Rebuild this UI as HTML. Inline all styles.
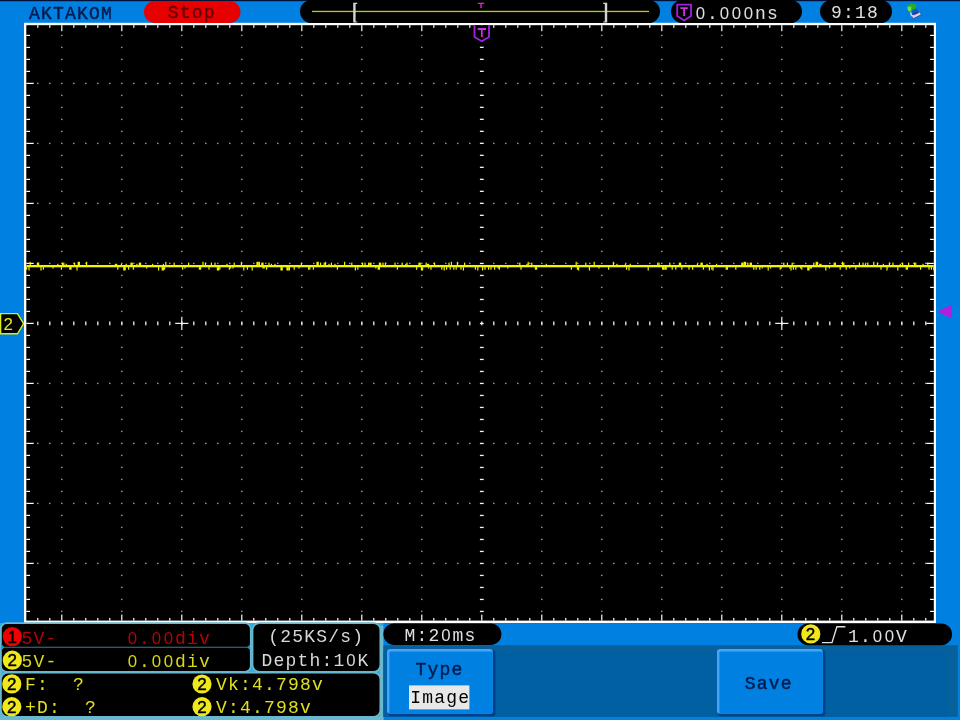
<!DOCTYPE html>
<html><head><meta charset="utf-8"><title>Oscilloscope</title>
<style>html,body{margin:0;padding:0;background:#0080E0;width:960px;height:720px;overflow:hidden}svg{display:block;filter:blur(0.4px)}.m{font-family:"Liberation Mono",monospace;white-space:pre}.s{font-family:"Liberation Sans",sans-serif}</style></head><body>
<svg width="960" height="720" viewBox="0 0 960 720">
<rect x="0" y="0" width="960" height="720" fill="#0080E0"/>
<rect x="0" y="0" width="960" height="1.2" fill="#001038"/>
<rect x="24" y="22.8" width="912" height="600.2" fill="#fff"/>
<rect x="26.3" y="25.2" width="907.5" height="595.4" fill="#000"/>
<g fill="#a4a4a4">
<rect x="61.10" y="34.70" width="1.4" height="1.4"/>
<rect x="61.10" y="46.70" width="1.4" height="1.4"/>
<rect x="61.10" y="58.70" width="1.4" height="1.4"/>
<rect x="61.10" y="70.70" width="1.4" height="1.4"/>
<rect x="61.10" y="82.70" width="1.4" height="1.4"/>
<rect x="61.10" y="94.70" width="1.4" height="1.4"/>
<rect x="61.10" y="106.70" width="1.4" height="1.4"/>
<rect x="61.10" y="118.70" width="1.4" height="1.4"/>
<rect x="61.10" y="130.70" width="1.4" height="1.4"/>
<rect x="61.10" y="142.70" width="1.4" height="1.4"/>
<rect x="61.10" y="154.70" width="1.4" height="1.4"/>
<rect x="61.10" y="166.70" width="1.4" height="1.4"/>
<rect x="61.10" y="178.70" width="1.4" height="1.4"/>
<rect x="61.10" y="190.70" width="1.4" height="1.4"/>
<rect x="61.10" y="202.70" width="1.4" height="1.4"/>
<rect x="61.10" y="214.70" width="1.4" height="1.4"/>
<rect x="61.10" y="226.70" width="1.4" height="1.4"/>
<rect x="61.10" y="238.70" width="1.4" height="1.4"/>
<rect x="61.10" y="250.70" width="1.4" height="1.4"/>
<rect x="61.10" y="262.70" width="1.4" height="1.4"/>
<rect x="61.10" y="274.70" width="1.4" height="1.4"/>
<rect x="61.10" y="286.70" width="1.4" height="1.4"/>
<rect x="61.10" y="298.70" width="1.4" height="1.4"/>
<rect x="61.10" y="310.70" width="1.4" height="1.4"/>
<rect x="61.10" y="322.70" width="1.4" height="1.4"/>
<rect x="61.10" y="334.70" width="1.4" height="1.4"/>
<rect x="61.10" y="346.70" width="1.4" height="1.4"/>
<rect x="61.10" y="358.70" width="1.4" height="1.4"/>
<rect x="61.10" y="370.70" width="1.4" height="1.4"/>
<rect x="61.10" y="382.70" width="1.4" height="1.4"/>
<rect x="61.10" y="394.70" width="1.4" height="1.4"/>
<rect x="61.10" y="406.70" width="1.4" height="1.4"/>
<rect x="61.10" y="418.70" width="1.4" height="1.4"/>
<rect x="61.10" y="430.70" width="1.4" height="1.4"/>
<rect x="61.10" y="442.70" width="1.4" height="1.4"/>
<rect x="61.10" y="454.70" width="1.4" height="1.4"/>
<rect x="61.10" y="466.70" width="1.4" height="1.4"/>
<rect x="61.10" y="478.70" width="1.4" height="1.4"/>
<rect x="61.10" y="490.70" width="1.4" height="1.4"/>
<rect x="61.10" y="502.70" width="1.4" height="1.4"/>
<rect x="61.10" y="514.70" width="1.4" height="1.4"/>
<rect x="61.10" y="526.70" width="1.4" height="1.4"/>
<rect x="61.10" y="538.70" width="1.4" height="1.4"/>
<rect x="61.10" y="550.70" width="1.4" height="1.4"/>
<rect x="61.10" y="562.70" width="1.4" height="1.4"/>
<rect x="61.10" y="574.70" width="1.4" height="1.4"/>
<rect x="61.10" y="586.70" width="1.4" height="1.4"/>
<rect x="61.10" y="598.70" width="1.4" height="1.4"/>
<rect x="61.10" y="610.70" width="1.4" height="1.4"/>
<rect x="121.10" y="34.70" width="1.4" height="1.4"/>
<rect x="121.10" y="46.70" width="1.4" height="1.4"/>
<rect x="121.10" y="58.70" width="1.4" height="1.4"/>
<rect x="121.10" y="70.70" width="1.4" height="1.4"/>
<rect x="121.10" y="82.70" width="1.4" height="1.4"/>
<rect x="121.10" y="94.70" width="1.4" height="1.4"/>
<rect x="121.10" y="106.70" width="1.4" height="1.4"/>
<rect x="121.10" y="118.70" width="1.4" height="1.4"/>
<rect x="121.10" y="130.70" width="1.4" height="1.4"/>
<rect x="121.10" y="142.70" width="1.4" height="1.4"/>
<rect x="121.10" y="154.70" width="1.4" height="1.4"/>
<rect x="121.10" y="166.70" width="1.4" height="1.4"/>
<rect x="121.10" y="178.70" width="1.4" height="1.4"/>
<rect x="121.10" y="190.70" width="1.4" height="1.4"/>
<rect x="121.10" y="202.70" width="1.4" height="1.4"/>
<rect x="121.10" y="214.70" width="1.4" height="1.4"/>
<rect x="121.10" y="226.70" width="1.4" height="1.4"/>
<rect x="121.10" y="238.70" width="1.4" height="1.4"/>
<rect x="121.10" y="250.70" width="1.4" height="1.4"/>
<rect x="121.10" y="262.70" width="1.4" height="1.4"/>
<rect x="121.10" y="274.70" width="1.4" height="1.4"/>
<rect x="121.10" y="286.70" width="1.4" height="1.4"/>
<rect x="121.10" y="298.70" width="1.4" height="1.4"/>
<rect x="121.10" y="310.70" width="1.4" height="1.4"/>
<rect x="121.10" y="322.70" width="1.4" height="1.4"/>
<rect x="121.10" y="334.70" width="1.4" height="1.4"/>
<rect x="121.10" y="346.70" width="1.4" height="1.4"/>
<rect x="121.10" y="358.70" width="1.4" height="1.4"/>
<rect x="121.10" y="370.70" width="1.4" height="1.4"/>
<rect x="121.10" y="382.70" width="1.4" height="1.4"/>
<rect x="121.10" y="394.70" width="1.4" height="1.4"/>
<rect x="121.10" y="406.70" width="1.4" height="1.4"/>
<rect x="121.10" y="418.70" width="1.4" height="1.4"/>
<rect x="121.10" y="430.70" width="1.4" height="1.4"/>
<rect x="121.10" y="442.70" width="1.4" height="1.4"/>
<rect x="121.10" y="454.70" width="1.4" height="1.4"/>
<rect x="121.10" y="466.70" width="1.4" height="1.4"/>
<rect x="121.10" y="478.70" width="1.4" height="1.4"/>
<rect x="121.10" y="490.70" width="1.4" height="1.4"/>
<rect x="121.10" y="502.70" width="1.4" height="1.4"/>
<rect x="121.10" y="514.70" width="1.4" height="1.4"/>
<rect x="121.10" y="526.70" width="1.4" height="1.4"/>
<rect x="121.10" y="538.70" width="1.4" height="1.4"/>
<rect x="121.10" y="550.70" width="1.4" height="1.4"/>
<rect x="121.10" y="562.70" width="1.4" height="1.4"/>
<rect x="121.10" y="574.70" width="1.4" height="1.4"/>
<rect x="121.10" y="586.70" width="1.4" height="1.4"/>
<rect x="121.10" y="598.70" width="1.4" height="1.4"/>
<rect x="121.10" y="610.70" width="1.4" height="1.4"/>
<rect x="181.10" y="34.70" width="1.4" height="1.4"/>
<rect x="181.10" y="46.70" width="1.4" height="1.4"/>
<rect x="181.10" y="58.70" width="1.4" height="1.4"/>
<rect x="181.10" y="70.70" width="1.4" height="1.4"/>
<rect x="181.10" y="82.70" width="1.4" height="1.4"/>
<rect x="181.10" y="94.70" width="1.4" height="1.4"/>
<rect x="181.10" y="106.70" width="1.4" height="1.4"/>
<rect x="181.10" y="118.70" width="1.4" height="1.4"/>
<rect x="181.10" y="130.70" width="1.4" height="1.4"/>
<rect x="181.10" y="142.70" width="1.4" height="1.4"/>
<rect x="181.10" y="154.70" width="1.4" height="1.4"/>
<rect x="181.10" y="166.70" width="1.4" height="1.4"/>
<rect x="181.10" y="178.70" width="1.4" height="1.4"/>
<rect x="181.10" y="190.70" width="1.4" height="1.4"/>
<rect x="181.10" y="202.70" width="1.4" height="1.4"/>
<rect x="181.10" y="214.70" width="1.4" height="1.4"/>
<rect x="181.10" y="226.70" width="1.4" height="1.4"/>
<rect x="181.10" y="238.70" width="1.4" height="1.4"/>
<rect x="181.10" y="250.70" width="1.4" height="1.4"/>
<rect x="181.10" y="262.70" width="1.4" height="1.4"/>
<rect x="181.10" y="274.70" width="1.4" height="1.4"/>
<rect x="181.10" y="286.70" width="1.4" height="1.4"/>
<rect x="181.10" y="298.70" width="1.4" height="1.4"/>
<rect x="181.10" y="310.70" width="1.4" height="1.4"/>
<rect x="181.10" y="322.70" width="1.4" height="1.4"/>
<rect x="181.10" y="334.70" width="1.4" height="1.4"/>
<rect x="181.10" y="346.70" width="1.4" height="1.4"/>
<rect x="181.10" y="358.70" width="1.4" height="1.4"/>
<rect x="181.10" y="370.70" width="1.4" height="1.4"/>
<rect x="181.10" y="382.70" width="1.4" height="1.4"/>
<rect x="181.10" y="394.70" width="1.4" height="1.4"/>
<rect x="181.10" y="406.70" width="1.4" height="1.4"/>
<rect x="181.10" y="418.70" width="1.4" height="1.4"/>
<rect x="181.10" y="430.70" width="1.4" height="1.4"/>
<rect x="181.10" y="442.70" width="1.4" height="1.4"/>
<rect x="181.10" y="454.70" width="1.4" height="1.4"/>
<rect x="181.10" y="466.70" width="1.4" height="1.4"/>
<rect x="181.10" y="478.70" width="1.4" height="1.4"/>
<rect x="181.10" y="490.70" width="1.4" height="1.4"/>
<rect x="181.10" y="502.70" width="1.4" height="1.4"/>
<rect x="181.10" y="514.70" width="1.4" height="1.4"/>
<rect x="181.10" y="526.70" width="1.4" height="1.4"/>
<rect x="181.10" y="538.70" width="1.4" height="1.4"/>
<rect x="181.10" y="550.70" width="1.4" height="1.4"/>
<rect x="181.10" y="562.70" width="1.4" height="1.4"/>
<rect x="181.10" y="574.70" width="1.4" height="1.4"/>
<rect x="181.10" y="586.70" width="1.4" height="1.4"/>
<rect x="181.10" y="598.70" width="1.4" height="1.4"/>
<rect x="181.10" y="610.70" width="1.4" height="1.4"/>
<rect x="241.10" y="34.70" width="1.4" height="1.4"/>
<rect x="241.10" y="46.70" width="1.4" height="1.4"/>
<rect x="241.10" y="58.70" width="1.4" height="1.4"/>
<rect x="241.10" y="70.70" width="1.4" height="1.4"/>
<rect x="241.10" y="82.70" width="1.4" height="1.4"/>
<rect x="241.10" y="94.70" width="1.4" height="1.4"/>
<rect x="241.10" y="106.70" width="1.4" height="1.4"/>
<rect x="241.10" y="118.70" width="1.4" height="1.4"/>
<rect x="241.10" y="130.70" width="1.4" height="1.4"/>
<rect x="241.10" y="142.70" width="1.4" height="1.4"/>
<rect x="241.10" y="154.70" width="1.4" height="1.4"/>
<rect x="241.10" y="166.70" width="1.4" height="1.4"/>
<rect x="241.10" y="178.70" width="1.4" height="1.4"/>
<rect x="241.10" y="190.70" width="1.4" height="1.4"/>
<rect x="241.10" y="202.70" width="1.4" height="1.4"/>
<rect x="241.10" y="214.70" width="1.4" height="1.4"/>
<rect x="241.10" y="226.70" width="1.4" height="1.4"/>
<rect x="241.10" y="238.70" width="1.4" height="1.4"/>
<rect x="241.10" y="250.70" width="1.4" height="1.4"/>
<rect x="241.10" y="262.70" width="1.4" height="1.4"/>
<rect x="241.10" y="274.70" width="1.4" height="1.4"/>
<rect x="241.10" y="286.70" width="1.4" height="1.4"/>
<rect x="241.10" y="298.70" width="1.4" height="1.4"/>
<rect x="241.10" y="310.70" width="1.4" height="1.4"/>
<rect x="241.10" y="322.70" width="1.4" height="1.4"/>
<rect x="241.10" y="334.70" width="1.4" height="1.4"/>
<rect x="241.10" y="346.70" width="1.4" height="1.4"/>
<rect x="241.10" y="358.70" width="1.4" height="1.4"/>
<rect x="241.10" y="370.70" width="1.4" height="1.4"/>
<rect x="241.10" y="382.70" width="1.4" height="1.4"/>
<rect x="241.10" y="394.70" width="1.4" height="1.4"/>
<rect x="241.10" y="406.70" width="1.4" height="1.4"/>
<rect x="241.10" y="418.70" width="1.4" height="1.4"/>
<rect x="241.10" y="430.70" width="1.4" height="1.4"/>
<rect x="241.10" y="442.70" width="1.4" height="1.4"/>
<rect x="241.10" y="454.70" width="1.4" height="1.4"/>
<rect x="241.10" y="466.70" width="1.4" height="1.4"/>
<rect x="241.10" y="478.70" width="1.4" height="1.4"/>
<rect x="241.10" y="490.70" width="1.4" height="1.4"/>
<rect x="241.10" y="502.70" width="1.4" height="1.4"/>
<rect x="241.10" y="514.70" width="1.4" height="1.4"/>
<rect x="241.10" y="526.70" width="1.4" height="1.4"/>
<rect x="241.10" y="538.70" width="1.4" height="1.4"/>
<rect x="241.10" y="550.70" width="1.4" height="1.4"/>
<rect x="241.10" y="562.70" width="1.4" height="1.4"/>
<rect x="241.10" y="574.70" width="1.4" height="1.4"/>
<rect x="241.10" y="586.70" width="1.4" height="1.4"/>
<rect x="241.10" y="598.70" width="1.4" height="1.4"/>
<rect x="241.10" y="610.70" width="1.4" height="1.4"/>
<rect x="301.10" y="34.70" width="1.4" height="1.4"/>
<rect x="301.10" y="46.70" width="1.4" height="1.4"/>
<rect x="301.10" y="58.70" width="1.4" height="1.4"/>
<rect x="301.10" y="70.70" width="1.4" height="1.4"/>
<rect x="301.10" y="82.70" width="1.4" height="1.4"/>
<rect x="301.10" y="94.70" width="1.4" height="1.4"/>
<rect x="301.10" y="106.70" width="1.4" height="1.4"/>
<rect x="301.10" y="118.70" width="1.4" height="1.4"/>
<rect x="301.10" y="130.70" width="1.4" height="1.4"/>
<rect x="301.10" y="142.70" width="1.4" height="1.4"/>
<rect x="301.10" y="154.70" width="1.4" height="1.4"/>
<rect x="301.10" y="166.70" width="1.4" height="1.4"/>
<rect x="301.10" y="178.70" width="1.4" height="1.4"/>
<rect x="301.10" y="190.70" width="1.4" height="1.4"/>
<rect x="301.10" y="202.70" width="1.4" height="1.4"/>
<rect x="301.10" y="214.70" width="1.4" height="1.4"/>
<rect x="301.10" y="226.70" width="1.4" height="1.4"/>
<rect x="301.10" y="238.70" width="1.4" height="1.4"/>
<rect x="301.10" y="250.70" width="1.4" height="1.4"/>
<rect x="301.10" y="262.70" width="1.4" height="1.4"/>
<rect x="301.10" y="274.70" width="1.4" height="1.4"/>
<rect x="301.10" y="286.70" width="1.4" height="1.4"/>
<rect x="301.10" y="298.70" width="1.4" height="1.4"/>
<rect x="301.10" y="310.70" width="1.4" height="1.4"/>
<rect x="301.10" y="322.70" width="1.4" height="1.4"/>
<rect x="301.10" y="334.70" width="1.4" height="1.4"/>
<rect x="301.10" y="346.70" width="1.4" height="1.4"/>
<rect x="301.10" y="358.70" width="1.4" height="1.4"/>
<rect x="301.10" y="370.70" width="1.4" height="1.4"/>
<rect x="301.10" y="382.70" width="1.4" height="1.4"/>
<rect x="301.10" y="394.70" width="1.4" height="1.4"/>
<rect x="301.10" y="406.70" width="1.4" height="1.4"/>
<rect x="301.10" y="418.70" width="1.4" height="1.4"/>
<rect x="301.10" y="430.70" width="1.4" height="1.4"/>
<rect x="301.10" y="442.70" width="1.4" height="1.4"/>
<rect x="301.10" y="454.70" width="1.4" height="1.4"/>
<rect x="301.10" y="466.70" width="1.4" height="1.4"/>
<rect x="301.10" y="478.70" width="1.4" height="1.4"/>
<rect x="301.10" y="490.70" width="1.4" height="1.4"/>
<rect x="301.10" y="502.70" width="1.4" height="1.4"/>
<rect x="301.10" y="514.70" width="1.4" height="1.4"/>
<rect x="301.10" y="526.70" width="1.4" height="1.4"/>
<rect x="301.10" y="538.70" width="1.4" height="1.4"/>
<rect x="301.10" y="550.70" width="1.4" height="1.4"/>
<rect x="301.10" y="562.70" width="1.4" height="1.4"/>
<rect x="301.10" y="574.70" width="1.4" height="1.4"/>
<rect x="301.10" y="586.70" width="1.4" height="1.4"/>
<rect x="301.10" y="598.70" width="1.4" height="1.4"/>
<rect x="301.10" y="610.70" width="1.4" height="1.4"/>
<rect x="361.10" y="34.70" width="1.4" height="1.4"/>
<rect x="361.10" y="46.70" width="1.4" height="1.4"/>
<rect x="361.10" y="58.70" width="1.4" height="1.4"/>
<rect x="361.10" y="70.70" width="1.4" height="1.4"/>
<rect x="361.10" y="82.70" width="1.4" height="1.4"/>
<rect x="361.10" y="94.70" width="1.4" height="1.4"/>
<rect x="361.10" y="106.70" width="1.4" height="1.4"/>
<rect x="361.10" y="118.70" width="1.4" height="1.4"/>
<rect x="361.10" y="130.70" width="1.4" height="1.4"/>
<rect x="361.10" y="142.70" width="1.4" height="1.4"/>
<rect x="361.10" y="154.70" width="1.4" height="1.4"/>
<rect x="361.10" y="166.70" width="1.4" height="1.4"/>
<rect x="361.10" y="178.70" width="1.4" height="1.4"/>
<rect x="361.10" y="190.70" width="1.4" height="1.4"/>
<rect x="361.10" y="202.70" width="1.4" height="1.4"/>
<rect x="361.10" y="214.70" width="1.4" height="1.4"/>
<rect x="361.10" y="226.70" width="1.4" height="1.4"/>
<rect x="361.10" y="238.70" width="1.4" height="1.4"/>
<rect x="361.10" y="250.70" width="1.4" height="1.4"/>
<rect x="361.10" y="262.70" width="1.4" height="1.4"/>
<rect x="361.10" y="274.70" width="1.4" height="1.4"/>
<rect x="361.10" y="286.70" width="1.4" height="1.4"/>
<rect x="361.10" y="298.70" width="1.4" height="1.4"/>
<rect x="361.10" y="310.70" width="1.4" height="1.4"/>
<rect x="361.10" y="322.70" width="1.4" height="1.4"/>
<rect x="361.10" y="334.70" width="1.4" height="1.4"/>
<rect x="361.10" y="346.70" width="1.4" height="1.4"/>
<rect x="361.10" y="358.70" width="1.4" height="1.4"/>
<rect x="361.10" y="370.70" width="1.4" height="1.4"/>
<rect x="361.10" y="382.70" width="1.4" height="1.4"/>
<rect x="361.10" y="394.70" width="1.4" height="1.4"/>
<rect x="361.10" y="406.70" width="1.4" height="1.4"/>
<rect x="361.10" y="418.70" width="1.4" height="1.4"/>
<rect x="361.10" y="430.70" width="1.4" height="1.4"/>
<rect x="361.10" y="442.70" width="1.4" height="1.4"/>
<rect x="361.10" y="454.70" width="1.4" height="1.4"/>
<rect x="361.10" y="466.70" width="1.4" height="1.4"/>
<rect x="361.10" y="478.70" width="1.4" height="1.4"/>
<rect x="361.10" y="490.70" width="1.4" height="1.4"/>
<rect x="361.10" y="502.70" width="1.4" height="1.4"/>
<rect x="361.10" y="514.70" width="1.4" height="1.4"/>
<rect x="361.10" y="526.70" width="1.4" height="1.4"/>
<rect x="361.10" y="538.70" width="1.4" height="1.4"/>
<rect x="361.10" y="550.70" width="1.4" height="1.4"/>
<rect x="361.10" y="562.70" width="1.4" height="1.4"/>
<rect x="361.10" y="574.70" width="1.4" height="1.4"/>
<rect x="361.10" y="586.70" width="1.4" height="1.4"/>
<rect x="361.10" y="598.70" width="1.4" height="1.4"/>
<rect x="361.10" y="610.70" width="1.4" height="1.4"/>
<rect x="421.10" y="34.70" width="1.4" height="1.4"/>
<rect x="421.10" y="46.70" width="1.4" height="1.4"/>
<rect x="421.10" y="58.70" width="1.4" height="1.4"/>
<rect x="421.10" y="70.70" width="1.4" height="1.4"/>
<rect x="421.10" y="82.70" width="1.4" height="1.4"/>
<rect x="421.10" y="94.70" width="1.4" height="1.4"/>
<rect x="421.10" y="106.70" width="1.4" height="1.4"/>
<rect x="421.10" y="118.70" width="1.4" height="1.4"/>
<rect x="421.10" y="130.70" width="1.4" height="1.4"/>
<rect x="421.10" y="142.70" width="1.4" height="1.4"/>
<rect x="421.10" y="154.70" width="1.4" height="1.4"/>
<rect x="421.10" y="166.70" width="1.4" height="1.4"/>
<rect x="421.10" y="178.70" width="1.4" height="1.4"/>
<rect x="421.10" y="190.70" width="1.4" height="1.4"/>
<rect x="421.10" y="202.70" width="1.4" height="1.4"/>
<rect x="421.10" y="214.70" width="1.4" height="1.4"/>
<rect x="421.10" y="226.70" width="1.4" height="1.4"/>
<rect x="421.10" y="238.70" width="1.4" height="1.4"/>
<rect x="421.10" y="250.70" width="1.4" height="1.4"/>
<rect x="421.10" y="262.70" width="1.4" height="1.4"/>
<rect x="421.10" y="274.70" width="1.4" height="1.4"/>
<rect x="421.10" y="286.70" width="1.4" height="1.4"/>
<rect x="421.10" y="298.70" width="1.4" height="1.4"/>
<rect x="421.10" y="310.70" width="1.4" height="1.4"/>
<rect x="421.10" y="322.70" width="1.4" height="1.4"/>
<rect x="421.10" y="334.70" width="1.4" height="1.4"/>
<rect x="421.10" y="346.70" width="1.4" height="1.4"/>
<rect x="421.10" y="358.70" width="1.4" height="1.4"/>
<rect x="421.10" y="370.70" width="1.4" height="1.4"/>
<rect x="421.10" y="382.70" width="1.4" height="1.4"/>
<rect x="421.10" y="394.70" width="1.4" height="1.4"/>
<rect x="421.10" y="406.70" width="1.4" height="1.4"/>
<rect x="421.10" y="418.70" width="1.4" height="1.4"/>
<rect x="421.10" y="430.70" width="1.4" height="1.4"/>
<rect x="421.10" y="442.70" width="1.4" height="1.4"/>
<rect x="421.10" y="454.70" width="1.4" height="1.4"/>
<rect x="421.10" y="466.70" width="1.4" height="1.4"/>
<rect x="421.10" y="478.70" width="1.4" height="1.4"/>
<rect x="421.10" y="490.70" width="1.4" height="1.4"/>
<rect x="421.10" y="502.70" width="1.4" height="1.4"/>
<rect x="421.10" y="514.70" width="1.4" height="1.4"/>
<rect x="421.10" y="526.70" width="1.4" height="1.4"/>
<rect x="421.10" y="538.70" width="1.4" height="1.4"/>
<rect x="421.10" y="550.70" width="1.4" height="1.4"/>
<rect x="421.10" y="562.70" width="1.4" height="1.4"/>
<rect x="421.10" y="574.70" width="1.4" height="1.4"/>
<rect x="421.10" y="586.70" width="1.4" height="1.4"/>
<rect x="421.10" y="598.70" width="1.4" height="1.4"/>
<rect x="421.10" y="610.70" width="1.4" height="1.4"/>
<rect x="541.10" y="34.70" width="1.4" height="1.4"/>
<rect x="541.10" y="46.70" width="1.4" height="1.4"/>
<rect x="541.10" y="58.70" width="1.4" height="1.4"/>
<rect x="541.10" y="70.70" width="1.4" height="1.4"/>
<rect x="541.10" y="82.70" width="1.4" height="1.4"/>
<rect x="541.10" y="94.70" width="1.4" height="1.4"/>
<rect x="541.10" y="106.70" width="1.4" height="1.4"/>
<rect x="541.10" y="118.70" width="1.4" height="1.4"/>
<rect x="541.10" y="130.70" width="1.4" height="1.4"/>
<rect x="541.10" y="142.70" width="1.4" height="1.4"/>
<rect x="541.10" y="154.70" width="1.4" height="1.4"/>
<rect x="541.10" y="166.70" width="1.4" height="1.4"/>
<rect x="541.10" y="178.70" width="1.4" height="1.4"/>
<rect x="541.10" y="190.70" width="1.4" height="1.4"/>
<rect x="541.10" y="202.70" width="1.4" height="1.4"/>
<rect x="541.10" y="214.70" width="1.4" height="1.4"/>
<rect x="541.10" y="226.70" width="1.4" height="1.4"/>
<rect x="541.10" y="238.70" width="1.4" height="1.4"/>
<rect x="541.10" y="250.70" width="1.4" height="1.4"/>
<rect x="541.10" y="262.70" width="1.4" height="1.4"/>
<rect x="541.10" y="274.70" width="1.4" height="1.4"/>
<rect x="541.10" y="286.70" width="1.4" height="1.4"/>
<rect x="541.10" y="298.70" width="1.4" height="1.4"/>
<rect x="541.10" y="310.70" width="1.4" height="1.4"/>
<rect x="541.10" y="322.70" width="1.4" height="1.4"/>
<rect x="541.10" y="334.70" width="1.4" height="1.4"/>
<rect x="541.10" y="346.70" width="1.4" height="1.4"/>
<rect x="541.10" y="358.70" width="1.4" height="1.4"/>
<rect x="541.10" y="370.70" width="1.4" height="1.4"/>
<rect x="541.10" y="382.70" width="1.4" height="1.4"/>
<rect x="541.10" y="394.70" width="1.4" height="1.4"/>
<rect x="541.10" y="406.70" width="1.4" height="1.4"/>
<rect x="541.10" y="418.70" width="1.4" height="1.4"/>
<rect x="541.10" y="430.70" width="1.4" height="1.4"/>
<rect x="541.10" y="442.70" width="1.4" height="1.4"/>
<rect x="541.10" y="454.70" width="1.4" height="1.4"/>
<rect x="541.10" y="466.70" width="1.4" height="1.4"/>
<rect x="541.10" y="478.70" width="1.4" height="1.4"/>
<rect x="541.10" y="490.70" width="1.4" height="1.4"/>
<rect x="541.10" y="502.70" width="1.4" height="1.4"/>
<rect x="541.10" y="514.70" width="1.4" height="1.4"/>
<rect x="541.10" y="526.70" width="1.4" height="1.4"/>
<rect x="541.10" y="538.70" width="1.4" height="1.4"/>
<rect x="541.10" y="550.70" width="1.4" height="1.4"/>
<rect x="541.10" y="562.70" width="1.4" height="1.4"/>
<rect x="541.10" y="574.70" width="1.4" height="1.4"/>
<rect x="541.10" y="586.70" width="1.4" height="1.4"/>
<rect x="541.10" y="598.70" width="1.4" height="1.4"/>
<rect x="541.10" y="610.70" width="1.4" height="1.4"/>
<rect x="601.10" y="34.70" width="1.4" height="1.4"/>
<rect x="601.10" y="46.70" width="1.4" height="1.4"/>
<rect x="601.10" y="58.70" width="1.4" height="1.4"/>
<rect x="601.10" y="70.70" width="1.4" height="1.4"/>
<rect x="601.10" y="82.70" width="1.4" height="1.4"/>
<rect x="601.10" y="94.70" width="1.4" height="1.4"/>
<rect x="601.10" y="106.70" width="1.4" height="1.4"/>
<rect x="601.10" y="118.70" width="1.4" height="1.4"/>
<rect x="601.10" y="130.70" width="1.4" height="1.4"/>
<rect x="601.10" y="142.70" width="1.4" height="1.4"/>
<rect x="601.10" y="154.70" width="1.4" height="1.4"/>
<rect x="601.10" y="166.70" width="1.4" height="1.4"/>
<rect x="601.10" y="178.70" width="1.4" height="1.4"/>
<rect x="601.10" y="190.70" width="1.4" height="1.4"/>
<rect x="601.10" y="202.70" width="1.4" height="1.4"/>
<rect x="601.10" y="214.70" width="1.4" height="1.4"/>
<rect x="601.10" y="226.70" width="1.4" height="1.4"/>
<rect x="601.10" y="238.70" width="1.4" height="1.4"/>
<rect x="601.10" y="250.70" width="1.4" height="1.4"/>
<rect x="601.10" y="262.70" width="1.4" height="1.4"/>
<rect x="601.10" y="274.70" width="1.4" height="1.4"/>
<rect x="601.10" y="286.70" width="1.4" height="1.4"/>
<rect x="601.10" y="298.70" width="1.4" height="1.4"/>
<rect x="601.10" y="310.70" width="1.4" height="1.4"/>
<rect x="601.10" y="322.70" width="1.4" height="1.4"/>
<rect x="601.10" y="334.70" width="1.4" height="1.4"/>
<rect x="601.10" y="346.70" width="1.4" height="1.4"/>
<rect x="601.10" y="358.70" width="1.4" height="1.4"/>
<rect x="601.10" y="370.70" width="1.4" height="1.4"/>
<rect x="601.10" y="382.70" width="1.4" height="1.4"/>
<rect x="601.10" y="394.70" width="1.4" height="1.4"/>
<rect x="601.10" y="406.70" width="1.4" height="1.4"/>
<rect x="601.10" y="418.70" width="1.4" height="1.4"/>
<rect x="601.10" y="430.70" width="1.4" height="1.4"/>
<rect x="601.10" y="442.70" width="1.4" height="1.4"/>
<rect x="601.10" y="454.70" width="1.4" height="1.4"/>
<rect x="601.10" y="466.70" width="1.4" height="1.4"/>
<rect x="601.10" y="478.70" width="1.4" height="1.4"/>
<rect x="601.10" y="490.70" width="1.4" height="1.4"/>
<rect x="601.10" y="502.70" width="1.4" height="1.4"/>
<rect x="601.10" y="514.70" width="1.4" height="1.4"/>
<rect x="601.10" y="526.70" width="1.4" height="1.4"/>
<rect x="601.10" y="538.70" width="1.4" height="1.4"/>
<rect x="601.10" y="550.70" width="1.4" height="1.4"/>
<rect x="601.10" y="562.70" width="1.4" height="1.4"/>
<rect x="601.10" y="574.70" width="1.4" height="1.4"/>
<rect x="601.10" y="586.70" width="1.4" height="1.4"/>
<rect x="601.10" y="598.70" width="1.4" height="1.4"/>
<rect x="601.10" y="610.70" width="1.4" height="1.4"/>
<rect x="661.10" y="34.70" width="1.4" height="1.4"/>
<rect x="661.10" y="46.70" width="1.4" height="1.4"/>
<rect x="661.10" y="58.70" width="1.4" height="1.4"/>
<rect x="661.10" y="70.70" width="1.4" height="1.4"/>
<rect x="661.10" y="82.70" width="1.4" height="1.4"/>
<rect x="661.10" y="94.70" width="1.4" height="1.4"/>
<rect x="661.10" y="106.70" width="1.4" height="1.4"/>
<rect x="661.10" y="118.70" width="1.4" height="1.4"/>
<rect x="661.10" y="130.70" width="1.4" height="1.4"/>
<rect x="661.10" y="142.70" width="1.4" height="1.4"/>
<rect x="661.10" y="154.70" width="1.4" height="1.4"/>
<rect x="661.10" y="166.70" width="1.4" height="1.4"/>
<rect x="661.10" y="178.70" width="1.4" height="1.4"/>
<rect x="661.10" y="190.70" width="1.4" height="1.4"/>
<rect x="661.10" y="202.70" width="1.4" height="1.4"/>
<rect x="661.10" y="214.70" width="1.4" height="1.4"/>
<rect x="661.10" y="226.70" width="1.4" height="1.4"/>
<rect x="661.10" y="238.70" width="1.4" height="1.4"/>
<rect x="661.10" y="250.70" width="1.4" height="1.4"/>
<rect x="661.10" y="262.70" width="1.4" height="1.4"/>
<rect x="661.10" y="274.70" width="1.4" height="1.4"/>
<rect x="661.10" y="286.70" width="1.4" height="1.4"/>
<rect x="661.10" y="298.70" width="1.4" height="1.4"/>
<rect x="661.10" y="310.70" width="1.4" height="1.4"/>
<rect x="661.10" y="322.70" width="1.4" height="1.4"/>
<rect x="661.10" y="334.70" width="1.4" height="1.4"/>
<rect x="661.10" y="346.70" width="1.4" height="1.4"/>
<rect x="661.10" y="358.70" width="1.4" height="1.4"/>
<rect x="661.10" y="370.70" width="1.4" height="1.4"/>
<rect x="661.10" y="382.70" width="1.4" height="1.4"/>
<rect x="661.10" y="394.70" width="1.4" height="1.4"/>
<rect x="661.10" y="406.70" width="1.4" height="1.4"/>
<rect x="661.10" y="418.70" width="1.4" height="1.4"/>
<rect x="661.10" y="430.70" width="1.4" height="1.4"/>
<rect x="661.10" y="442.70" width="1.4" height="1.4"/>
<rect x="661.10" y="454.70" width="1.4" height="1.4"/>
<rect x="661.10" y="466.70" width="1.4" height="1.4"/>
<rect x="661.10" y="478.70" width="1.4" height="1.4"/>
<rect x="661.10" y="490.70" width="1.4" height="1.4"/>
<rect x="661.10" y="502.70" width="1.4" height="1.4"/>
<rect x="661.10" y="514.70" width="1.4" height="1.4"/>
<rect x="661.10" y="526.70" width="1.4" height="1.4"/>
<rect x="661.10" y="538.70" width="1.4" height="1.4"/>
<rect x="661.10" y="550.70" width="1.4" height="1.4"/>
<rect x="661.10" y="562.70" width="1.4" height="1.4"/>
<rect x="661.10" y="574.70" width="1.4" height="1.4"/>
<rect x="661.10" y="586.70" width="1.4" height="1.4"/>
<rect x="661.10" y="598.70" width="1.4" height="1.4"/>
<rect x="661.10" y="610.70" width="1.4" height="1.4"/>
<rect x="721.10" y="34.70" width="1.4" height="1.4"/>
<rect x="721.10" y="46.70" width="1.4" height="1.4"/>
<rect x="721.10" y="58.70" width="1.4" height="1.4"/>
<rect x="721.10" y="70.70" width="1.4" height="1.4"/>
<rect x="721.10" y="82.70" width="1.4" height="1.4"/>
<rect x="721.10" y="94.70" width="1.4" height="1.4"/>
<rect x="721.10" y="106.70" width="1.4" height="1.4"/>
<rect x="721.10" y="118.70" width="1.4" height="1.4"/>
<rect x="721.10" y="130.70" width="1.4" height="1.4"/>
<rect x="721.10" y="142.70" width="1.4" height="1.4"/>
<rect x="721.10" y="154.70" width="1.4" height="1.4"/>
<rect x="721.10" y="166.70" width="1.4" height="1.4"/>
<rect x="721.10" y="178.70" width="1.4" height="1.4"/>
<rect x="721.10" y="190.70" width="1.4" height="1.4"/>
<rect x="721.10" y="202.70" width="1.4" height="1.4"/>
<rect x="721.10" y="214.70" width="1.4" height="1.4"/>
<rect x="721.10" y="226.70" width="1.4" height="1.4"/>
<rect x="721.10" y="238.70" width="1.4" height="1.4"/>
<rect x="721.10" y="250.70" width="1.4" height="1.4"/>
<rect x="721.10" y="262.70" width="1.4" height="1.4"/>
<rect x="721.10" y="274.70" width="1.4" height="1.4"/>
<rect x="721.10" y="286.70" width="1.4" height="1.4"/>
<rect x="721.10" y="298.70" width="1.4" height="1.4"/>
<rect x="721.10" y="310.70" width="1.4" height="1.4"/>
<rect x="721.10" y="322.70" width="1.4" height="1.4"/>
<rect x="721.10" y="334.70" width="1.4" height="1.4"/>
<rect x="721.10" y="346.70" width="1.4" height="1.4"/>
<rect x="721.10" y="358.70" width="1.4" height="1.4"/>
<rect x="721.10" y="370.70" width="1.4" height="1.4"/>
<rect x="721.10" y="382.70" width="1.4" height="1.4"/>
<rect x="721.10" y="394.70" width="1.4" height="1.4"/>
<rect x="721.10" y="406.70" width="1.4" height="1.4"/>
<rect x="721.10" y="418.70" width="1.4" height="1.4"/>
<rect x="721.10" y="430.70" width="1.4" height="1.4"/>
<rect x="721.10" y="442.70" width="1.4" height="1.4"/>
<rect x="721.10" y="454.70" width="1.4" height="1.4"/>
<rect x="721.10" y="466.70" width="1.4" height="1.4"/>
<rect x="721.10" y="478.70" width="1.4" height="1.4"/>
<rect x="721.10" y="490.70" width="1.4" height="1.4"/>
<rect x="721.10" y="502.70" width="1.4" height="1.4"/>
<rect x="721.10" y="514.70" width="1.4" height="1.4"/>
<rect x="721.10" y="526.70" width="1.4" height="1.4"/>
<rect x="721.10" y="538.70" width="1.4" height="1.4"/>
<rect x="721.10" y="550.70" width="1.4" height="1.4"/>
<rect x="721.10" y="562.70" width="1.4" height="1.4"/>
<rect x="721.10" y="574.70" width="1.4" height="1.4"/>
<rect x="721.10" y="586.70" width="1.4" height="1.4"/>
<rect x="721.10" y="598.70" width="1.4" height="1.4"/>
<rect x="721.10" y="610.70" width="1.4" height="1.4"/>
<rect x="781.10" y="34.70" width="1.4" height="1.4"/>
<rect x="781.10" y="46.70" width="1.4" height="1.4"/>
<rect x="781.10" y="58.70" width="1.4" height="1.4"/>
<rect x="781.10" y="70.70" width="1.4" height="1.4"/>
<rect x="781.10" y="82.70" width="1.4" height="1.4"/>
<rect x="781.10" y="94.70" width="1.4" height="1.4"/>
<rect x="781.10" y="106.70" width="1.4" height="1.4"/>
<rect x="781.10" y="118.70" width="1.4" height="1.4"/>
<rect x="781.10" y="130.70" width="1.4" height="1.4"/>
<rect x="781.10" y="142.70" width="1.4" height="1.4"/>
<rect x="781.10" y="154.70" width="1.4" height="1.4"/>
<rect x="781.10" y="166.70" width="1.4" height="1.4"/>
<rect x="781.10" y="178.70" width="1.4" height="1.4"/>
<rect x="781.10" y="190.70" width="1.4" height="1.4"/>
<rect x="781.10" y="202.70" width="1.4" height="1.4"/>
<rect x="781.10" y="214.70" width="1.4" height="1.4"/>
<rect x="781.10" y="226.70" width="1.4" height="1.4"/>
<rect x="781.10" y="238.70" width="1.4" height="1.4"/>
<rect x="781.10" y="250.70" width="1.4" height="1.4"/>
<rect x="781.10" y="262.70" width="1.4" height="1.4"/>
<rect x="781.10" y="274.70" width="1.4" height="1.4"/>
<rect x="781.10" y="286.70" width="1.4" height="1.4"/>
<rect x="781.10" y="298.70" width="1.4" height="1.4"/>
<rect x="781.10" y="310.70" width="1.4" height="1.4"/>
<rect x="781.10" y="322.70" width="1.4" height="1.4"/>
<rect x="781.10" y="334.70" width="1.4" height="1.4"/>
<rect x="781.10" y="346.70" width="1.4" height="1.4"/>
<rect x="781.10" y="358.70" width="1.4" height="1.4"/>
<rect x="781.10" y="370.70" width="1.4" height="1.4"/>
<rect x="781.10" y="382.70" width="1.4" height="1.4"/>
<rect x="781.10" y="394.70" width="1.4" height="1.4"/>
<rect x="781.10" y="406.70" width="1.4" height="1.4"/>
<rect x="781.10" y="418.70" width="1.4" height="1.4"/>
<rect x="781.10" y="430.70" width="1.4" height="1.4"/>
<rect x="781.10" y="442.70" width="1.4" height="1.4"/>
<rect x="781.10" y="454.70" width="1.4" height="1.4"/>
<rect x="781.10" y="466.70" width="1.4" height="1.4"/>
<rect x="781.10" y="478.70" width="1.4" height="1.4"/>
<rect x="781.10" y="490.70" width="1.4" height="1.4"/>
<rect x="781.10" y="502.70" width="1.4" height="1.4"/>
<rect x="781.10" y="514.70" width="1.4" height="1.4"/>
<rect x="781.10" y="526.70" width="1.4" height="1.4"/>
<rect x="781.10" y="538.70" width="1.4" height="1.4"/>
<rect x="781.10" y="550.70" width="1.4" height="1.4"/>
<rect x="781.10" y="562.70" width="1.4" height="1.4"/>
<rect x="781.10" y="574.70" width="1.4" height="1.4"/>
<rect x="781.10" y="586.70" width="1.4" height="1.4"/>
<rect x="781.10" y="598.70" width="1.4" height="1.4"/>
<rect x="781.10" y="610.70" width="1.4" height="1.4"/>
<rect x="841.10" y="34.70" width="1.4" height="1.4"/>
<rect x="841.10" y="46.70" width="1.4" height="1.4"/>
<rect x="841.10" y="58.70" width="1.4" height="1.4"/>
<rect x="841.10" y="70.70" width="1.4" height="1.4"/>
<rect x="841.10" y="82.70" width="1.4" height="1.4"/>
<rect x="841.10" y="94.70" width="1.4" height="1.4"/>
<rect x="841.10" y="106.70" width="1.4" height="1.4"/>
<rect x="841.10" y="118.70" width="1.4" height="1.4"/>
<rect x="841.10" y="130.70" width="1.4" height="1.4"/>
<rect x="841.10" y="142.70" width="1.4" height="1.4"/>
<rect x="841.10" y="154.70" width="1.4" height="1.4"/>
<rect x="841.10" y="166.70" width="1.4" height="1.4"/>
<rect x="841.10" y="178.70" width="1.4" height="1.4"/>
<rect x="841.10" y="190.70" width="1.4" height="1.4"/>
<rect x="841.10" y="202.70" width="1.4" height="1.4"/>
<rect x="841.10" y="214.70" width="1.4" height="1.4"/>
<rect x="841.10" y="226.70" width="1.4" height="1.4"/>
<rect x="841.10" y="238.70" width="1.4" height="1.4"/>
<rect x="841.10" y="250.70" width="1.4" height="1.4"/>
<rect x="841.10" y="262.70" width="1.4" height="1.4"/>
<rect x="841.10" y="274.70" width="1.4" height="1.4"/>
<rect x="841.10" y="286.70" width="1.4" height="1.4"/>
<rect x="841.10" y="298.70" width="1.4" height="1.4"/>
<rect x="841.10" y="310.70" width="1.4" height="1.4"/>
<rect x="841.10" y="322.70" width="1.4" height="1.4"/>
<rect x="841.10" y="334.70" width="1.4" height="1.4"/>
<rect x="841.10" y="346.70" width="1.4" height="1.4"/>
<rect x="841.10" y="358.70" width="1.4" height="1.4"/>
<rect x="841.10" y="370.70" width="1.4" height="1.4"/>
<rect x="841.10" y="382.70" width="1.4" height="1.4"/>
<rect x="841.10" y="394.70" width="1.4" height="1.4"/>
<rect x="841.10" y="406.70" width="1.4" height="1.4"/>
<rect x="841.10" y="418.70" width="1.4" height="1.4"/>
<rect x="841.10" y="430.70" width="1.4" height="1.4"/>
<rect x="841.10" y="442.70" width="1.4" height="1.4"/>
<rect x="841.10" y="454.70" width="1.4" height="1.4"/>
<rect x="841.10" y="466.70" width="1.4" height="1.4"/>
<rect x="841.10" y="478.70" width="1.4" height="1.4"/>
<rect x="841.10" y="490.70" width="1.4" height="1.4"/>
<rect x="841.10" y="502.70" width="1.4" height="1.4"/>
<rect x="841.10" y="514.70" width="1.4" height="1.4"/>
<rect x="841.10" y="526.70" width="1.4" height="1.4"/>
<rect x="841.10" y="538.70" width="1.4" height="1.4"/>
<rect x="841.10" y="550.70" width="1.4" height="1.4"/>
<rect x="841.10" y="562.70" width="1.4" height="1.4"/>
<rect x="841.10" y="574.70" width="1.4" height="1.4"/>
<rect x="841.10" y="586.70" width="1.4" height="1.4"/>
<rect x="841.10" y="598.70" width="1.4" height="1.4"/>
<rect x="841.10" y="610.70" width="1.4" height="1.4"/>
<rect x="901.10" y="34.70" width="1.4" height="1.4"/>
<rect x="901.10" y="46.70" width="1.4" height="1.4"/>
<rect x="901.10" y="58.70" width="1.4" height="1.4"/>
<rect x="901.10" y="70.70" width="1.4" height="1.4"/>
<rect x="901.10" y="82.70" width="1.4" height="1.4"/>
<rect x="901.10" y="94.70" width="1.4" height="1.4"/>
<rect x="901.10" y="106.70" width="1.4" height="1.4"/>
<rect x="901.10" y="118.70" width="1.4" height="1.4"/>
<rect x="901.10" y="130.70" width="1.4" height="1.4"/>
<rect x="901.10" y="142.70" width="1.4" height="1.4"/>
<rect x="901.10" y="154.70" width="1.4" height="1.4"/>
<rect x="901.10" y="166.70" width="1.4" height="1.4"/>
<rect x="901.10" y="178.70" width="1.4" height="1.4"/>
<rect x="901.10" y="190.70" width="1.4" height="1.4"/>
<rect x="901.10" y="202.70" width="1.4" height="1.4"/>
<rect x="901.10" y="214.70" width="1.4" height="1.4"/>
<rect x="901.10" y="226.70" width="1.4" height="1.4"/>
<rect x="901.10" y="238.70" width="1.4" height="1.4"/>
<rect x="901.10" y="250.70" width="1.4" height="1.4"/>
<rect x="901.10" y="262.70" width="1.4" height="1.4"/>
<rect x="901.10" y="274.70" width="1.4" height="1.4"/>
<rect x="901.10" y="286.70" width="1.4" height="1.4"/>
<rect x="901.10" y="298.70" width="1.4" height="1.4"/>
<rect x="901.10" y="310.70" width="1.4" height="1.4"/>
<rect x="901.10" y="322.70" width="1.4" height="1.4"/>
<rect x="901.10" y="334.70" width="1.4" height="1.4"/>
<rect x="901.10" y="346.70" width="1.4" height="1.4"/>
<rect x="901.10" y="358.70" width="1.4" height="1.4"/>
<rect x="901.10" y="370.70" width="1.4" height="1.4"/>
<rect x="901.10" y="382.70" width="1.4" height="1.4"/>
<rect x="901.10" y="394.70" width="1.4" height="1.4"/>
<rect x="901.10" y="406.70" width="1.4" height="1.4"/>
<rect x="901.10" y="418.70" width="1.4" height="1.4"/>
<rect x="901.10" y="430.70" width="1.4" height="1.4"/>
<rect x="901.10" y="442.70" width="1.4" height="1.4"/>
<rect x="901.10" y="454.70" width="1.4" height="1.4"/>
<rect x="901.10" y="466.70" width="1.4" height="1.4"/>
<rect x="901.10" y="478.70" width="1.4" height="1.4"/>
<rect x="901.10" y="490.70" width="1.4" height="1.4"/>
<rect x="901.10" y="502.70" width="1.4" height="1.4"/>
<rect x="901.10" y="514.70" width="1.4" height="1.4"/>
<rect x="901.10" y="526.70" width="1.4" height="1.4"/>
<rect x="901.10" y="538.70" width="1.4" height="1.4"/>
<rect x="901.10" y="550.70" width="1.4" height="1.4"/>
<rect x="901.10" y="562.70" width="1.4" height="1.4"/>
<rect x="901.10" y="574.70" width="1.4" height="1.4"/>
<rect x="901.10" y="586.70" width="1.4" height="1.4"/>
<rect x="901.10" y="598.70" width="1.4" height="1.4"/>
<rect x="901.10" y="610.70" width="1.4" height="1.4"/>
<rect x="37.10" y="82.70" width="1.4" height="1.4"/>
<rect x="49.10" y="82.70" width="1.4" height="1.4"/>
<rect x="73.10" y="82.70" width="1.4" height="1.4"/>
<rect x="85.10" y="82.70" width="1.4" height="1.4"/>
<rect x="97.10" y="82.70" width="1.4" height="1.4"/>
<rect x="109.10" y="82.70" width="1.4" height="1.4"/>
<rect x="133.10" y="82.70" width="1.4" height="1.4"/>
<rect x="145.10" y="82.70" width="1.4" height="1.4"/>
<rect x="157.10" y="82.70" width="1.4" height="1.4"/>
<rect x="169.10" y="82.70" width="1.4" height="1.4"/>
<rect x="193.10" y="82.70" width="1.4" height="1.4"/>
<rect x="205.10" y="82.70" width="1.4" height="1.4"/>
<rect x="217.10" y="82.70" width="1.4" height="1.4"/>
<rect x="229.10" y="82.70" width="1.4" height="1.4"/>
<rect x="253.10" y="82.70" width="1.4" height="1.4"/>
<rect x="265.10" y="82.70" width="1.4" height="1.4"/>
<rect x="277.10" y="82.70" width="1.4" height="1.4"/>
<rect x="289.10" y="82.70" width="1.4" height="1.4"/>
<rect x="313.10" y="82.70" width="1.4" height="1.4"/>
<rect x="325.10" y="82.70" width="1.4" height="1.4"/>
<rect x="337.10" y="82.70" width="1.4" height="1.4"/>
<rect x="349.10" y="82.70" width="1.4" height="1.4"/>
<rect x="373.10" y="82.70" width="1.4" height="1.4"/>
<rect x="385.10" y="82.70" width="1.4" height="1.4"/>
<rect x="397.10" y="82.70" width="1.4" height="1.4"/>
<rect x="409.10" y="82.70" width="1.4" height="1.4"/>
<rect x="433.10" y="82.70" width="1.4" height="1.4"/>
<rect x="445.10" y="82.70" width="1.4" height="1.4"/>
<rect x="457.10" y="82.70" width="1.4" height="1.4"/>
<rect x="469.10" y="82.70" width="1.4" height="1.4"/>
<rect x="493.10" y="82.70" width="1.4" height="1.4"/>
<rect x="505.10" y="82.70" width="1.4" height="1.4"/>
<rect x="517.10" y="82.70" width="1.4" height="1.4"/>
<rect x="529.10" y="82.70" width="1.4" height="1.4"/>
<rect x="553.10" y="82.70" width="1.4" height="1.4"/>
<rect x="565.10" y="82.70" width="1.4" height="1.4"/>
<rect x="577.10" y="82.70" width="1.4" height="1.4"/>
<rect x="589.10" y="82.70" width="1.4" height="1.4"/>
<rect x="613.10" y="82.70" width="1.4" height="1.4"/>
<rect x="625.10" y="82.70" width="1.4" height="1.4"/>
<rect x="637.10" y="82.70" width="1.4" height="1.4"/>
<rect x="649.10" y="82.70" width="1.4" height="1.4"/>
<rect x="673.10" y="82.70" width="1.4" height="1.4"/>
<rect x="685.10" y="82.70" width="1.4" height="1.4"/>
<rect x="697.10" y="82.70" width="1.4" height="1.4"/>
<rect x="709.10" y="82.70" width="1.4" height="1.4"/>
<rect x="733.10" y="82.70" width="1.4" height="1.4"/>
<rect x="745.10" y="82.70" width="1.4" height="1.4"/>
<rect x="757.10" y="82.70" width="1.4" height="1.4"/>
<rect x="769.10" y="82.70" width="1.4" height="1.4"/>
<rect x="793.10" y="82.70" width="1.4" height="1.4"/>
<rect x="805.10" y="82.70" width="1.4" height="1.4"/>
<rect x="817.10" y="82.70" width="1.4" height="1.4"/>
<rect x="829.10" y="82.70" width="1.4" height="1.4"/>
<rect x="853.10" y="82.70" width="1.4" height="1.4"/>
<rect x="865.10" y="82.70" width="1.4" height="1.4"/>
<rect x="877.10" y="82.70" width="1.4" height="1.4"/>
<rect x="889.10" y="82.70" width="1.4" height="1.4"/>
<rect x="913.10" y="82.70" width="1.4" height="1.4"/>
<rect x="925.10" y="82.70" width="1.4" height="1.4"/>
<rect x="37.10" y="142.70" width="1.4" height="1.4"/>
<rect x="49.10" y="142.70" width="1.4" height="1.4"/>
<rect x="73.10" y="142.70" width="1.4" height="1.4"/>
<rect x="85.10" y="142.70" width="1.4" height="1.4"/>
<rect x="97.10" y="142.70" width="1.4" height="1.4"/>
<rect x="109.10" y="142.70" width="1.4" height="1.4"/>
<rect x="133.10" y="142.70" width="1.4" height="1.4"/>
<rect x="145.10" y="142.70" width="1.4" height="1.4"/>
<rect x="157.10" y="142.70" width="1.4" height="1.4"/>
<rect x="169.10" y="142.70" width="1.4" height="1.4"/>
<rect x="193.10" y="142.70" width="1.4" height="1.4"/>
<rect x="205.10" y="142.70" width="1.4" height="1.4"/>
<rect x="217.10" y="142.70" width="1.4" height="1.4"/>
<rect x="229.10" y="142.70" width="1.4" height="1.4"/>
<rect x="253.10" y="142.70" width="1.4" height="1.4"/>
<rect x="265.10" y="142.70" width="1.4" height="1.4"/>
<rect x="277.10" y="142.70" width="1.4" height="1.4"/>
<rect x="289.10" y="142.70" width="1.4" height="1.4"/>
<rect x="313.10" y="142.70" width="1.4" height="1.4"/>
<rect x="325.10" y="142.70" width="1.4" height="1.4"/>
<rect x="337.10" y="142.70" width="1.4" height="1.4"/>
<rect x="349.10" y="142.70" width="1.4" height="1.4"/>
<rect x="373.10" y="142.70" width="1.4" height="1.4"/>
<rect x="385.10" y="142.70" width="1.4" height="1.4"/>
<rect x="397.10" y="142.70" width="1.4" height="1.4"/>
<rect x="409.10" y="142.70" width="1.4" height="1.4"/>
<rect x="433.10" y="142.70" width="1.4" height="1.4"/>
<rect x="445.10" y="142.70" width="1.4" height="1.4"/>
<rect x="457.10" y="142.70" width="1.4" height="1.4"/>
<rect x="469.10" y="142.70" width="1.4" height="1.4"/>
<rect x="493.10" y="142.70" width="1.4" height="1.4"/>
<rect x="505.10" y="142.70" width="1.4" height="1.4"/>
<rect x="517.10" y="142.70" width="1.4" height="1.4"/>
<rect x="529.10" y="142.70" width="1.4" height="1.4"/>
<rect x="553.10" y="142.70" width="1.4" height="1.4"/>
<rect x="565.10" y="142.70" width="1.4" height="1.4"/>
<rect x="577.10" y="142.70" width="1.4" height="1.4"/>
<rect x="589.10" y="142.70" width="1.4" height="1.4"/>
<rect x="613.10" y="142.70" width="1.4" height="1.4"/>
<rect x="625.10" y="142.70" width="1.4" height="1.4"/>
<rect x="637.10" y="142.70" width="1.4" height="1.4"/>
<rect x="649.10" y="142.70" width="1.4" height="1.4"/>
<rect x="673.10" y="142.70" width="1.4" height="1.4"/>
<rect x="685.10" y="142.70" width="1.4" height="1.4"/>
<rect x="697.10" y="142.70" width="1.4" height="1.4"/>
<rect x="709.10" y="142.70" width="1.4" height="1.4"/>
<rect x="733.10" y="142.70" width="1.4" height="1.4"/>
<rect x="745.10" y="142.70" width="1.4" height="1.4"/>
<rect x="757.10" y="142.70" width="1.4" height="1.4"/>
<rect x="769.10" y="142.70" width="1.4" height="1.4"/>
<rect x="793.10" y="142.70" width="1.4" height="1.4"/>
<rect x="805.10" y="142.70" width="1.4" height="1.4"/>
<rect x="817.10" y="142.70" width="1.4" height="1.4"/>
<rect x="829.10" y="142.70" width="1.4" height="1.4"/>
<rect x="853.10" y="142.70" width="1.4" height="1.4"/>
<rect x="865.10" y="142.70" width="1.4" height="1.4"/>
<rect x="877.10" y="142.70" width="1.4" height="1.4"/>
<rect x="889.10" y="142.70" width="1.4" height="1.4"/>
<rect x="913.10" y="142.70" width="1.4" height="1.4"/>
<rect x="925.10" y="142.70" width="1.4" height="1.4"/>
<rect x="37.10" y="202.70" width="1.4" height="1.4"/>
<rect x="49.10" y="202.70" width="1.4" height="1.4"/>
<rect x="73.10" y="202.70" width="1.4" height="1.4"/>
<rect x="85.10" y="202.70" width="1.4" height="1.4"/>
<rect x="97.10" y="202.70" width="1.4" height="1.4"/>
<rect x="109.10" y="202.70" width="1.4" height="1.4"/>
<rect x="133.10" y="202.70" width="1.4" height="1.4"/>
<rect x="145.10" y="202.70" width="1.4" height="1.4"/>
<rect x="157.10" y="202.70" width="1.4" height="1.4"/>
<rect x="169.10" y="202.70" width="1.4" height="1.4"/>
<rect x="193.10" y="202.70" width="1.4" height="1.4"/>
<rect x="205.10" y="202.70" width="1.4" height="1.4"/>
<rect x="217.10" y="202.70" width="1.4" height="1.4"/>
<rect x="229.10" y="202.70" width="1.4" height="1.4"/>
<rect x="253.10" y="202.70" width="1.4" height="1.4"/>
<rect x="265.10" y="202.70" width="1.4" height="1.4"/>
<rect x="277.10" y="202.70" width="1.4" height="1.4"/>
<rect x="289.10" y="202.70" width="1.4" height="1.4"/>
<rect x="313.10" y="202.70" width="1.4" height="1.4"/>
<rect x="325.10" y="202.70" width="1.4" height="1.4"/>
<rect x="337.10" y="202.70" width="1.4" height="1.4"/>
<rect x="349.10" y="202.70" width="1.4" height="1.4"/>
<rect x="373.10" y="202.70" width="1.4" height="1.4"/>
<rect x="385.10" y="202.70" width="1.4" height="1.4"/>
<rect x="397.10" y="202.70" width="1.4" height="1.4"/>
<rect x="409.10" y="202.70" width="1.4" height="1.4"/>
<rect x="433.10" y="202.70" width="1.4" height="1.4"/>
<rect x="445.10" y="202.70" width="1.4" height="1.4"/>
<rect x="457.10" y="202.70" width="1.4" height="1.4"/>
<rect x="469.10" y="202.70" width="1.4" height="1.4"/>
<rect x="493.10" y="202.70" width="1.4" height="1.4"/>
<rect x="505.10" y="202.70" width="1.4" height="1.4"/>
<rect x="517.10" y="202.70" width="1.4" height="1.4"/>
<rect x="529.10" y="202.70" width="1.4" height="1.4"/>
<rect x="553.10" y="202.70" width="1.4" height="1.4"/>
<rect x="565.10" y="202.70" width="1.4" height="1.4"/>
<rect x="577.10" y="202.70" width="1.4" height="1.4"/>
<rect x="589.10" y="202.70" width="1.4" height="1.4"/>
<rect x="613.10" y="202.70" width="1.4" height="1.4"/>
<rect x="625.10" y="202.70" width="1.4" height="1.4"/>
<rect x="637.10" y="202.70" width="1.4" height="1.4"/>
<rect x="649.10" y="202.70" width="1.4" height="1.4"/>
<rect x="673.10" y="202.70" width="1.4" height="1.4"/>
<rect x="685.10" y="202.70" width="1.4" height="1.4"/>
<rect x="697.10" y="202.70" width="1.4" height="1.4"/>
<rect x="709.10" y="202.70" width="1.4" height="1.4"/>
<rect x="733.10" y="202.70" width="1.4" height="1.4"/>
<rect x="745.10" y="202.70" width="1.4" height="1.4"/>
<rect x="757.10" y="202.70" width="1.4" height="1.4"/>
<rect x="769.10" y="202.70" width="1.4" height="1.4"/>
<rect x="793.10" y="202.70" width="1.4" height="1.4"/>
<rect x="805.10" y="202.70" width="1.4" height="1.4"/>
<rect x="817.10" y="202.70" width="1.4" height="1.4"/>
<rect x="829.10" y="202.70" width="1.4" height="1.4"/>
<rect x="853.10" y="202.70" width="1.4" height="1.4"/>
<rect x="865.10" y="202.70" width="1.4" height="1.4"/>
<rect x="877.10" y="202.70" width="1.4" height="1.4"/>
<rect x="889.10" y="202.70" width="1.4" height="1.4"/>
<rect x="913.10" y="202.70" width="1.4" height="1.4"/>
<rect x="925.10" y="202.70" width="1.4" height="1.4"/>
<rect x="37.10" y="262.70" width="1.4" height="1.4"/>
<rect x="49.10" y="262.70" width="1.4" height="1.4"/>
<rect x="73.10" y="262.70" width="1.4" height="1.4"/>
<rect x="85.10" y="262.70" width="1.4" height="1.4"/>
<rect x="97.10" y="262.70" width="1.4" height="1.4"/>
<rect x="109.10" y="262.70" width="1.4" height="1.4"/>
<rect x="133.10" y="262.70" width="1.4" height="1.4"/>
<rect x="145.10" y="262.70" width="1.4" height="1.4"/>
<rect x="157.10" y="262.70" width="1.4" height="1.4"/>
<rect x="169.10" y="262.70" width="1.4" height="1.4"/>
<rect x="193.10" y="262.70" width="1.4" height="1.4"/>
<rect x="205.10" y="262.70" width="1.4" height="1.4"/>
<rect x="217.10" y="262.70" width="1.4" height="1.4"/>
<rect x="229.10" y="262.70" width="1.4" height="1.4"/>
<rect x="253.10" y="262.70" width="1.4" height="1.4"/>
<rect x="265.10" y="262.70" width="1.4" height="1.4"/>
<rect x="277.10" y="262.70" width="1.4" height="1.4"/>
<rect x="289.10" y="262.70" width="1.4" height="1.4"/>
<rect x="313.10" y="262.70" width="1.4" height="1.4"/>
<rect x="325.10" y="262.70" width="1.4" height="1.4"/>
<rect x="337.10" y="262.70" width="1.4" height="1.4"/>
<rect x="349.10" y="262.70" width="1.4" height="1.4"/>
<rect x="373.10" y="262.70" width="1.4" height="1.4"/>
<rect x="385.10" y="262.70" width="1.4" height="1.4"/>
<rect x="397.10" y="262.70" width="1.4" height="1.4"/>
<rect x="409.10" y="262.70" width="1.4" height="1.4"/>
<rect x="433.10" y="262.70" width="1.4" height="1.4"/>
<rect x="445.10" y="262.70" width="1.4" height="1.4"/>
<rect x="457.10" y="262.70" width="1.4" height="1.4"/>
<rect x="469.10" y="262.70" width="1.4" height="1.4"/>
<rect x="493.10" y="262.70" width="1.4" height="1.4"/>
<rect x="505.10" y="262.70" width="1.4" height="1.4"/>
<rect x="517.10" y="262.70" width="1.4" height="1.4"/>
<rect x="529.10" y="262.70" width="1.4" height="1.4"/>
<rect x="553.10" y="262.70" width="1.4" height="1.4"/>
<rect x="565.10" y="262.70" width="1.4" height="1.4"/>
<rect x="577.10" y="262.70" width="1.4" height="1.4"/>
<rect x="589.10" y="262.70" width="1.4" height="1.4"/>
<rect x="613.10" y="262.70" width="1.4" height="1.4"/>
<rect x="625.10" y="262.70" width="1.4" height="1.4"/>
<rect x="637.10" y="262.70" width="1.4" height="1.4"/>
<rect x="649.10" y="262.70" width="1.4" height="1.4"/>
<rect x="673.10" y="262.70" width="1.4" height="1.4"/>
<rect x="685.10" y="262.70" width="1.4" height="1.4"/>
<rect x="697.10" y="262.70" width="1.4" height="1.4"/>
<rect x="709.10" y="262.70" width="1.4" height="1.4"/>
<rect x="733.10" y="262.70" width="1.4" height="1.4"/>
<rect x="745.10" y="262.70" width="1.4" height="1.4"/>
<rect x="757.10" y="262.70" width="1.4" height="1.4"/>
<rect x="769.10" y="262.70" width="1.4" height="1.4"/>
<rect x="793.10" y="262.70" width="1.4" height="1.4"/>
<rect x="805.10" y="262.70" width="1.4" height="1.4"/>
<rect x="817.10" y="262.70" width="1.4" height="1.4"/>
<rect x="829.10" y="262.70" width="1.4" height="1.4"/>
<rect x="853.10" y="262.70" width="1.4" height="1.4"/>
<rect x="865.10" y="262.70" width="1.4" height="1.4"/>
<rect x="877.10" y="262.70" width="1.4" height="1.4"/>
<rect x="889.10" y="262.70" width="1.4" height="1.4"/>
<rect x="913.10" y="262.70" width="1.4" height="1.4"/>
<rect x="925.10" y="262.70" width="1.4" height="1.4"/>
<rect x="37.10" y="382.70" width="1.4" height="1.4"/>
<rect x="49.10" y="382.70" width="1.4" height="1.4"/>
<rect x="73.10" y="382.70" width="1.4" height="1.4"/>
<rect x="85.10" y="382.70" width="1.4" height="1.4"/>
<rect x="97.10" y="382.70" width="1.4" height="1.4"/>
<rect x="109.10" y="382.70" width="1.4" height="1.4"/>
<rect x="133.10" y="382.70" width="1.4" height="1.4"/>
<rect x="145.10" y="382.70" width="1.4" height="1.4"/>
<rect x="157.10" y="382.70" width="1.4" height="1.4"/>
<rect x="169.10" y="382.70" width="1.4" height="1.4"/>
<rect x="193.10" y="382.70" width="1.4" height="1.4"/>
<rect x="205.10" y="382.70" width="1.4" height="1.4"/>
<rect x="217.10" y="382.70" width="1.4" height="1.4"/>
<rect x="229.10" y="382.70" width="1.4" height="1.4"/>
<rect x="253.10" y="382.70" width="1.4" height="1.4"/>
<rect x="265.10" y="382.70" width="1.4" height="1.4"/>
<rect x="277.10" y="382.70" width="1.4" height="1.4"/>
<rect x="289.10" y="382.70" width="1.4" height="1.4"/>
<rect x="313.10" y="382.70" width="1.4" height="1.4"/>
<rect x="325.10" y="382.70" width="1.4" height="1.4"/>
<rect x="337.10" y="382.70" width="1.4" height="1.4"/>
<rect x="349.10" y="382.70" width="1.4" height="1.4"/>
<rect x="373.10" y="382.70" width="1.4" height="1.4"/>
<rect x="385.10" y="382.70" width="1.4" height="1.4"/>
<rect x="397.10" y="382.70" width="1.4" height="1.4"/>
<rect x="409.10" y="382.70" width="1.4" height="1.4"/>
<rect x="433.10" y="382.70" width="1.4" height="1.4"/>
<rect x="445.10" y="382.70" width="1.4" height="1.4"/>
<rect x="457.10" y="382.70" width="1.4" height="1.4"/>
<rect x="469.10" y="382.70" width="1.4" height="1.4"/>
<rect x="493.10" y="382.70" width="1.4" height="1.4"/>
<rect x="505.10" y="382.70" width="1.4" height="1.4"/>
<rect x="517.10" y="382.70" width="1.4" height="1.4"/>
<rect x="529.10" y="382.70" width="1.4" height="1.4"/>
<rect x="553.10" y="382.70" width="1.4" height="1.4"/>
<rect x="565.10" y="382.70" width="1.4" height="1.4"/>
<rect x="577.10" y="382.70" width="1.4" height="1.4"/>
<rect x="589.10" y="382.70" width="1.4" height="1.4"/>
<rect x="613.10" y="382.70" width="1.4" height="1.4"/>
<rect x="625.10" y="382.70" width="1.4" height="1.4"/>
<rect x="637.10" y="382.70" width="1.4" height="1.4"/>
<rect x="649.10" y="382.70" width="1.4" height="1.4"/>
<rect x="673.10" y="382.70" width="1.4" height="1.4"/>
<rect x="685.10" y="382.70" width="1.4" height="1.4"/>
<rect x="697.10" y="382.70" width="1.4" height="1.4"/>
<rect x="709.10" y="382.70" width="1.4" height="1.4"/>
<rect x="733.10" y="382.70" width="1.4" height="1.4"/>
<rect x="745.10" y="382.70" width="1.4" height="1.4"/>
<rect x="757.10" y="382.70" width="1.4" height="1.4"/>
<rect x="769.10" y="382.70" width="1.4" height="1.4"/>
<rect x="793.10" y="382.70" width="1.4" height="1.4"/>
<rect x="805.10" y="382.70" width="1.4" height="1.4"/>
<rect x="817.10" y="382.70" width="1.4" height="1.4"/>
<rect x="829.10" y="382.70" width="1.4" height="1.4"/>
<rect x="853.10" y="382.70" width="1.4" height="1.4"/>
<rect x="865.10" y="382.70" width="1.4" height="1.4"/>
<rect x="877.10" y="382.70" width="1.4" height="1.4"/>
<rect x="889.10" y="382.70" width="1.4" height="1.4"/>
<rect x="913.10" y="382.70" width="1.4" height="1.4"/>
<rect x="925.10" y="382.70" width="1.4" height="1.4"/>
<rect x="37.10" y="442.70" width="1.4" height="1.4"/>
<rect x="49.10" y="442.70" width="1.4" height="1.4"/>
<rect x="73.10" y="442.70" width="1.4" height="1.4"/>
<rect x="85.10" y="442.70" width="1.4" height="1.4"/>
<rect x="97.10" y="442.70" width="1.4" height="1.4"/>
<rect x="109.10" y="442.70" width="1.4" height="1.4"/>
<rect x="133.10" y="442.70" width="1.4" height="1.4"/>
<rect x="145.10" y="442.70" width="1.4" height="1.4"/>
<rect x="157.10" y="442.70" width="1.4" height="1.4"/>
<rect x="169.10" y="442.70" width="1.4" height="1.4"/>
<rect x="193.10" y="442.70" width="1.4" height="1.4"/>
<rect x="205.10" y="442.70" width="1.4" height="1.4"/>
<rect x="217.10" y="442.70" width="1.4" height="1.4"/>
<rect x="229.10" y="442.70" width="1.4" height="1.4"/>
<rect x="253.10" y="442.70" width="1.4" height="1.4"/>
<rect x="265.10" y="442.70" width="1.4" height="1.4"/>
<rect x="277.10" y="442.70" width="1.4" height="1.4"/>
<rect x="289.10" y="442.70" width="1.4" height="1.4"/>
<rect x="313.10" y="442.70" width="1.4" height="1.4"/>
<rect x="325.10" y="442.70" width="1.4" height="1.4"/>
<rect x="337.10" y="442.70" width="1.4" height="1.4"/>
<rect x="349.10" y="442.70" width="1.4" height="1.4"/>
<rect x="373.10" y="442.70" width="1.4" height="1.4"/>
<rect x="385.10" y="442.70" width="1.4" height="1.4"/>
<rect x="397.10" y="442.70" width="1.4" height="1.4"/>
<rect x="409.10" y="442.70" width="1.4" height="1.4"/>
<rect x="433.10" y="442.70" width="1.4" height="1.4"/>
<rect x="445.10" y="442.70" width="1.4" height="1.4"/>
<rect x="457.10" y="442.70" width="1.4" height="1.4"/>
<rect x="469.10" y="442.70" width="1.4" height="1.4"/>
<rect x="493.10" y="442.70" width="1.4" height="1.4"/>
<rect x="505.10" y="442.70" width="1.4" height="1.4"/>
<rect x="517.10" y="442.70" width="1.4" height="1.4"/>
<rect x="529.10" y="442.70" width="1.4" height="1.4"/>
<rect x="553.10" y="442.70" width="1.4" height="1.4"/>
<rect x="565.10" y="442.70" width="1.4" height="1.4"/>
<rect x="577.10" y="442.70" width="1.4" height="1.4"/>
<rect x="589.10" y="442.70" width="1.4" height="1.4"/>
<rect x="613.10" y="442.70" width="1.4" height="1.4"/>
<rect x="625.10" y="442.70" width="1.4" height="1.4"/>
<rect x="637.10" y="442.70" width="1.4" height="1.4"/>
<rect x="649.10" y="442.70" width="1.4" height="1.4"/>
<rect x="673.10" y="442.70" width="1.4" height="1.4"/>
<rect x="685.10" y="442.70" width="1.4" height="1.4"/>
<rect x="697.10" y="442.70" width="1.4" height="1.4"/>
<rect x="709.10" y="442.70" width="1.4" height="1.4"/>
<rect x="733.10" y="442.70" width="1.4" height="1.4"/>
<rect x="745.10" y="442.70" width="1.4" height="1.4"/>
<rect x="757.10" y="442.70" width="1.4" height="1.4"/>
<rect x="769.10" y="442.70" width="1.4" height="1.4"/>
<rect x="793.10" y="442.70" width="1.4" height="1.4"/>
<rect x="805.10" y="442.70" width="1.4" height="1.4"/>
<rect x="817.10" y="442.70" width="1.4" height="1.4"/>
<rect x="829.10" y="442.70" width="1.4" height="1.4"/>
<rect x="853.10" y="442.70" width="1.4" height="1.4"/>
<rect x="865.10" y="442.70" width="1.4" height="1.4"/>
<rect x="877.10" y="442.70" width="1.4" height="1.4"/>
<rect x="889.10" y="442.70" width="1.4" height="1.4"/>
<rect x="913.10" y="442.70" width="1.4" height="1.4"/>
<rect x="925.10" y="442.70" width="1.4" height="1.4"/>
<rect x="37.10" y="502.70" width="1.4" height="1.4"/>
<rect x="49.10" y="502.70" width="1.4" height="1.4"/>
<rect x="73.10" y="502.70" width="1.4" height="1.4"/>
<rect x="85.10" y="502.70" width="1.4" height="1.4"/>
<rect x="97.10" y="502.70" width="1.4" height="1.4"/>
<rect x="109.10" y="502.70" width="1.4" height="1.4"/>
<rect x="133.10" y="502.70" width="1.4" height="1.4"/>
<rect x="145.10" y="502.70" width="1.4" height="1.4"/>
<rect x="157.10" y="502.70" width="1.4" height="1.4"/>
<rect x="169.10" y="502.70" width="1.4" height="1.4"/>
<rect x="193.10" y="502.70" width="1.4" height="1.4"/>
<rect x="205.10" y="502.70" width="1.4" height="1.4"/>
<rect x="217.10" y="502.70" width="1.4" height="1.4"/>
<rect x="229.10" y="502.70" width="1.4" height="1.4"/>
<rect x="253.10" y="502.70" width="1.4" height="1.4"/>
<rect x="265.10" y="502.70" width="1.4" height="1.4"/>
<rect x="277.10" y="502.70" width="1.4" height="1.4"/>
<rect x="289.10" y="502.70" width="1.4" height="1.4"/>
<rect x="313.10" y="502.70" width="1.4" height="1.4"/>
<rect x="325.10" y="502.70" width="1.4" height="1.4"/>
<rect x="337.10" y="502.70" width="1.4" height="1.4"/>
<rect x="349.10" y="502.70" width="1.4" height="1.4"/>
<rect x="373.10" y="502.70" width="1.4" height="1.4"/>
<rect x="385.10" y="502.70" width="1.4" height="1.4"/>
<rect x="397.10" y="502.70" width="1.4" height="1.4"/>
<rect x="409.10" y="502.70" width="1.4" height="1.4"/>
<rect x="433.10" y="502.70" width="1.4" height="1.4"/>
<rect x="445.10" y="502.70" width="1.4" height="1.4"/>
<rect x="457.10" y="502.70" width="1.4" height="1.4"/>
<rect x="469.10" y="502.70" width="1.4" height="1.4"/>
<rect x="493.10" y="502.70" width="1.4" height="1.4"/>
<rect x="505.10" y="502.70" width="1.4" height="1.4"/>
<rect x="517.10" y="502.70" width="1.4" height="1.4"/>
<rect x="529.10" y="502.70" width="1.4" height="1.4"/>
<rect x="553.10" y="502.70" width="1.4" height="1.4"/>
<rect x="565.10" y="502.70" width="1.4" height="1.4"/>
<rect x="577.10" y="502.70" width="1.4" height="1.4"/>
<rect x="589.10" y="502.70" width="1.4" height="1.4"/>
<rect x="613.10" y="502.70" width="1.4" height="1.4"/>
<rect x="625.10" y="502.70" width="1.4" height="1.4"/>
<rect x="637.10" y="502.70" width="1.4" height="1.4"/>
<rect x="649.10" y="502.70" width="1.4" height="1.4"/>
<rect x="673.10" y="502.70" width="1.4" height="1.4"/>
<rect x="685.10" y="502.70" width="1.4" height="1.4"/>
<rect x="697.10" y="502.70" width="1.4" height="1.4"/>
<rect x="709.10" y="502.70" width="1.4" height="1.4"/>
<rect x="733.10" y="502.70" width="1.4" height="1.4"/>
<rect x="745.10" y="502.70" width="1.4" height="1.4"/>
<rect x="757.10" y="502.70" width="1.4" height="1.4"/>
<rect x="769.10" y="502.70" width="1.4" height="1.4"/>
<rect x="793.10" y="502.70" width="1.4" height="1.4"/>
<rect x="805.10" y="502.70" width="1.4" height="1.4"/>
<rect x="817.10" y="502.70" width="1.4" height="1.4"/>
<rect x="829.10" y="502.70" width="1.4" height="1.4"/>
<rect x="853.10" y="502.70" width="1.4" height="1.4"/>
<rect x="865.10" y="502.70" width="1.4" height="1.4"/>
<rect x="877.10" y="502.70" width="1.4" height="1.4"/>
<rect x="889.10" y="502.70" width="1.4" height="1.4"/>
<rect x="913.10" y="502.70" width="1.4" height="1.4"/>
<rect x="925.10" y="502.70" width="1.4" height="1.4"/>
<rect x="37.10" y="562.70" width="1.4" height="1.4"/>
<rect x="49.10" y="562.70" width="1.4" height="1.4"/>
<rect x="73.10" y="562.70" width="1.4" height="1.4"/>
<rect x="85.10" y="562.70" width="1.4" height="1.4"/>
<rect x="97.10" y="562.70" width="1.4" height="1.4"/>
<rect x="109.10" y="562.70" width="1.4" height="1.4"/>
<rect x="133.10" y="562.70" width="1.4" height="1.4"/>
<rect x="145.10" y="562.70" width="1.4" height="1.4"/>
<rect x="157.10" y="562.70" width="1.4" height="1.4"/>
<rect x="169.10" y="562.70" width="1.4" height="1.4"/>
<rect x="193.10" y="562.70" width="1.4" height="1.4"/>
<rect x="205.10" y="562.70" width="1.4" height="1.4"/>
<rect x="217.10" y="562.70" width="1.4" height="1.4"/>
<rect x="229.10" y="562.70" width="1.4" height="1.4"/>
<rect x="253.10" y="562.70" width="1.4" height="1.4"/>
<rect x="265.10" y="562.70" width="1.4" height="1.4"/>
<rect x="277.10" y="562.70" width="1.4" height="1.4"/>
<rect x="289.10" y="562.70" width="1.4" height="1.4"/>
<rect x="313.10" y="562.70" width="1.4" height="1.4"/>
<rect x="325.10" y="562.70" width="1.4" height="1.4"/>
<rect x="337.10" y="562.70" width="1.4" height="1.4"/>
<rect x="349.10" y="562.70" width="1.4" height="1.4"/>
<rect x="373.10" y="562.70" width="1.4" height="1.4"/>
<rect x="385.10" y="562.70" width="1.4" height="1.4"/>
<rect x="397.10" y="562.70" width="1.4" height="1.4"/>
<rect x="409.10" y="562.70" width="1.4" height="1.4"/>
<rect x="433.10" y="562.70" width="1.4" height="1.4"/>
<rect x="445.10" y="562.70" width="1.4" height="1.4"/>
<rect x="457.10" y="562.70" width="1.4" height="1.4"/>
<rect x="469.10" y="562.70" width="1.4" height="1.4"/>
<rect x="493.10" y="562.70" width="1.4" height="1.4"/>
<rect x="505.10" y="562.70" width="1.4" height="1.4"/>
<rect x="517.10" y="562.70" width="1.4" height="1.4"/>
<rect x="529.10" y="562.70" width="1.4" height="1.4"/>
<rect x="553.10" y="562.70" width="1.4" height="1.4"/>
<rect x="565.10" y="562.70" width="1.4" height="1.4"/>
<rect x="577.10" y="562.70" width="1.4" height="1.4"/>
<rect x="589.10" y="562.70" width="1.4" height="1.4"/>
<rect x="613.10" y="562.70" width="1.4" height="1.4"/>
<rect x="625.10" y="562.70" width="1.4" height="1.4"/>
<rect x="637.10" y="562.70" width="1.4" height="1.4"/>
<rect x="649.10" y="562.70" width="1.4" height="1.4"/>
<rect x="673.10" y="562.70" width="1.4" height="1.4"/>
<rect x="685.10" y="562.70" width="1.4" height="1.4"/>
<rect x="697.10" y="562.70" width="1.4" height="1.4"/>
<rect x="709.10" y="562.70" width="1.4" height="1.4"/>
<rect x="733.10" y="562.70" width="1.4" height="1.4"/>
<rect x="745.10" y="562.70" width="1.4" height="1.4"/>
<rect x="757.10" y="562.70" width="1.4" height="1.4"/>
<rect x="769.10" y="562.70" width="1.4" height="1.4"/>
<rect x="793.10" y="562.70" width="1.4" height="1.4"/>
<rect x="805.10" y="562.70" width="1.4" height="1.4"/>
<rect x="817.10" y="562.70" width="1.4" height="1.4"/>
<rect x="829.10" y="562.70" width="1.4" height="1.4"/>
<rect x="853.10" y="562.70" width="1.4" height="1.4"/>
<rect x="865.10" y="562.70" width="1.4" height="1.4"/>
<rect x="877.10" y="562.70" width="1.4" height="1.4"/>
<rect x="889.10" y="562.70" width="1.4" height="1.4"/>
<rect x="913.10" y="562.70" width="1.4" height="1.4"/>
<rect x="925.10" y="562.70" width="1.4" height="1.4"/>
</g>
<g fill="#f4f4f4">
<rect x="479.9" y="34.7" width="3.8" height="1.3"/>
<rect x="479.9" y="46.7" width="3.8" height="1.3"/>
<rect x="479.9" y="58.7" width="3.8" height="1.3"/>
<rect x="479.9" y="70.7" width="3.8" height="1.3"/>
<rect x="479.9" y="82.7" width="3.8" height="1.3"/>
<rect x="479.9" y="94.7" width="3.8" height="1.3"/>
<rect x="479.9" y="106.7" width="3.8" height="1.3"/>
<rect x="479.9" y="118.7" width="3.8" height="1.3"/>
<rect x="479.9" y="130.7" width="3.8" height="1.3"/>
<rect x="479.9" y="142.7" width="3.8" height="1.3"/>
<rect x="479.9" y="154.7" width="3.8" height="1.3"/>
<rect x="479.9" y="166.7" width="3.8" height="1.3"/>
<rect x="479.9" y="178.7" width="3.8" height="1.3"/>
<rect x="479.9" y="190.7" width="3.8" height="1.3"/>
<rect x="479.9" y="202.7" width="3.8" height="1.3"/>
<rect x="479.9" y="214.7" width="3.8" height="1.3"/>
<rect x="479.9" y="226.7" width="3.8" height="1.3"/>
<rect x="479.9" y="238.7" width="3.8" height="1.3"/>
<rect x="479.9" y="250.7" width="3.8" height="1.3"/>
<rect x="479.9" y="262.8" width="3.8" height="1.3"/>
<rect x="479.9" y="274.8" width="3.8" height="1.3"/>
<rect x="479.9" y="286.8" width="3.8" height="1.3"/>
<rect x="479.9" y="298.8" width="3.8" height="1.3"/>
<rect x="479.9" y="310.8" width="3.8" height="1.3"/>
<rect x="479.9" y="322.8" width="3.8" height="1.3"/>
<rect x="479.9" y="334.8" width="3.8" height="1.3"/>
<rect x="479.9" y="346.8" width="3.8" height="1.3"/>
<rect x="479.9" y="358.8" width="3.8" height="1.3"/>
<rect x="479.9" y="370.8" width="3.8" height="1.3"/>
<rect x="479.9" y="382.8" width="3.8" height="1.3"/>
<rect x="479.9" y="394.8" width="3.8" height="1.3"/>
<rect x="479.9" y="406.8" width="3.8" height="1.3"/>
<rect x="479.9" y="418.8" width="3.8" height="1.3"/>
<rect x="479.9" y="430.8" width="3.8" height="1.3"/>
<rect x="479.9" y="442.8" width="3.8" height="1.3"/>
<rect x="479.9" y="454.8" width="3.8" height="1.3"/>
<rect x="479.9" y="466.8" width="3.8" height="1.3"/>
<rect x="479.9" y="478.8" width="3.8" height="1.3"/>
<rect x="479.9" y="490.8" width="3.8" height="1.3"/>
<rect x="479.9" y="502.8" width="3.8" height="1.3"/>
<rect x="479.9" y="514.8" width="3.8" height="1.3"/>
<rect x="479.9" y="526.8" width="3.8" height="1.3"/>
<rect x="479.9" y="538.8" width="3.8" height="1.3"/>
<rect x="479.9" y="550.8" width="3.8" height="1.3"/>
<rect x="479.9" y="562.8" width="3.8" height="1.3"/>
<rect x="479.9" y="574.8" width="3.8" height="1.3"/>
<rect x="479.9" y="586.8" width="3.8" height="1.3"/>
<rect x="479.9" y="598.8" width="3.8" height="1.3"/>
<rect x="479.9" y="610.8" width="3.8" height="1.3"/>
<rect x="37.15" y="321.5" width="1.3" height="3.8"/>
<rect x="49.15" y="321.5" width="1.3" height="3.8"/>
<rect x="61.15" y="321.5" width="1.3" height="3.8"/>
<rect x="73.15" y="321.5" width="1.3" height="3.8"/>
<rect x="85.15" y="321.5" width="1.3" height="3.8"/>
<rect x="97.15" y="321.5" width="1.3" height="3.8"/>
<rect x="109.15" y="321.5" width="1.3" height="3.8"/>
<rect x="121.15" y="321.5" width="1.3" height="3.8"/>
<rect x="133.15" y="321.5" width="1.3" height="3.8"/>
<rect x="145.15" y="321.5" width="1.3" height="3.8"/>
<rect x="157.15" y="321.5" width="1.3" height="3.8"/>
<rect x="169.15" y="321.5" width="1.3" height="3.8"/>
<rect x="181.15" y="321.5" width="1.3" height="3.8"/>
<rect x="193.15" y="321.5" width="1.3" height="3.8"/>
<rect x="205.15" y="321.5" width="1.3" height="3.8"/>
<rect x="217.15" y="321.5" width="1.3" height="3.8"/>
<rect x="229.15" y="321.5" width="1.3" height="3.8"/>
<rect x="241.15" y="321.5" width="1.3" height="3.8"/>
<rect x="253.15" y="321.5" width="1.3" height="3.8"/>
<rect x="265.15" y="321.5" width="1.3" height="3.8"/>
<rect x="277.15" y="321.5" width="1.3" height="3.8"/>
<rect x="289.15" y="321.5" width="1.3" height="3.8"/>
<rect x="301.15" y="321.5" width="1.3" height="3.8"/>
<rect x="313.15" y="321.5" width="1.3" height="3.8"/>
<rect x="325.15" y="321.5" width="1.3" height="3.8"/>
<rect x="337.15" y="321.5" width="1.3" height="3.8"/>
<rect x="349.15" y="321.5" width="1.3" height="3.8"/>
<rect x="361.15" y="321.5" width="1.3" height="3.8"/>
<rect x="373.15" y="321.5" width="1.3" height="3.8"/>
<rect x="385.15" y="321.5" width="1.3" height="3.8"/>
<rect x="397.15" y="321.5" width="1.3" height="3.8"/>
<rect x="409.15" y="321.5" width="1.3" height="3.8"/>
<rect x="421.15" y="321.5" width="1.3" height="3.8"/>
<rect x="433.15" y="321.5" width="1.3" height="3.8"/>
<rect x="445.15" y="321.5" width="1.3" height="3.8"/>
<rect x="457.15" y="321.5" width="1.3" height="3.8"/>
<rect x="469.15" y="321.5" width="1.3" height="3.8"/>
<rect x="481.15" y="321.5" width="1.3" height="3.8"/>
<rect x="493.15" y="321.5" width="1.3" height="3.8"/>
<rect x="505.15" y="321.5" width="1.3" height="3.8"/>
<rect x="517.15" y="321.5" width="1.3" height="3.8"/>
<rect x="529.15" y="321.5" width="1.3" height="3.8"/>
<rect x="541.15" y="321.5" width="1.3" height="3.8"/>
<rect x="553.15" y="321.5" width="1.3" height="3.8"/>
<rect x="565.15" y="321.5" width="1.3" height="3.8"/>
<rect x="577.15" y="321.5" width="1.3" height="3.8"/>
<rect x="589.15" y="321.5" width="1.3" height="3.8"/>
<rect x="601.15" y="321.5" width="1.3" height="3.8"/>
<rect x="613.15" y="321.5" width="1.3" height="3.8"/>
<rect x="625.15" y="321.5" width="1.3" height="3.8"/>
<rect x="637.15" y="321.5" width="1.3" height="3.8"/>
<rect x="649.15" y="321.5" width="1.3" height="3.8"/>
<rect x="661.15" y="321.5" width="1.3" height="3.8"/>
<rect x="673.15" y="321.5" width="1.3" height="3.8"/>
<rect x="685.15" y="321.5" width="1.3" height="3.8"/>
<rect x="697.15" y="321.5" width="1.3" height="3.8"/>
<rect x="709.15" y="321.5" width="1.3" height="3.8"/>
<rect x="721.15" y="321.5" width="1.3" height="3.8"/>
<rect x="733.15" y="321.5" width="1.3" height="3.8"/>
<rect x="745.15" y="321.5" width="1.3" height="3.8"/>
<rect x="757.15" y="321.5" width="1.3" height="3.8"/>
<rect x="769.15" y="321.5" width="1.3" height="3.8"/>
<rect x="781.15" y="321.5" width="1.3" height="3.8"/>
<rect x="793.15" y="321.5" width="1.3" height="3.8"/>
<rect x="805.15" y="321.5" width="1.3" height="3.8"/>
<rect x="817.15" y="321.5" width="1.3" height="3.8"/>
<rect x="829.15" y="321.5" width="1.3" height="3.8"/>
<rect x="841.15" y="321.5" width="1.3" height="3.8"/>
<rect x="853.15" y="321.5" width="1.3" height="3.8"/>
<rect x="865.15" y="321.5" width="1.3" height="3.8"/>
<rect x="877.15" y="321.5" width="1.3" height="3.8"/>
<rect x="889.15" y="321.5" width="1.3" height="3.8"/>
<rect x="901.15" y="321.5" width="1.3" height="3.8"/>
<rect x="913.15" y="321.5" width="1.3" height="3.8"/>
<rect x="925.15" y="321.5" width="1.3" height="3.8"/>
<rect x="175.2" y="322.8" width="13.2" height="1.2"/>
<rect x="181.2" y="316.8" width="1.2" height="13.2"/>
<rect x="775.2" y="322.8" width="13.2" height="1.2"/>
<rect x="781.2" y="316.8" width="1.2" height="13.2"/>
</g>
<g fill="#fff">
<rect x="37.2" y="25.2" width="1.2" height="2.6"/>
<rect x="37.2" y="618.0" width="1.2" height="2.6"/>
<rect x="49.2" y="25.2" width="1.2" height="2.6"/>
<rect x="49.2" y="618.0" width="1.2" height="2.6"/>
<rect x="61.2" y="25.2" width="1.2" height="6"/>
<rect x="61.2" y="614.6" width="1.2" height="6"/>
<rect x="73.2" y="25.2" width="1.2" height="2.6"/>
<rect x="73.2" y="618.0" width="1.2" height="2.6"/>
<rect x="85.2" y="25.2" width="1.2" height="2.6"/>
<rect x="85.2" y="618.0" width="1.2" height="2.6"/>
<rect x="97.2" y="25.2" width="1.2" height="2.6"/>
<rect x="97.2" y="618.0" width="1.2" height="2.6"/>
<rect x="109.2" y="25.2" width="1.2" height="2.6"/>
<rect x="109.2" y="618.0" width="1.2" height="2.6"/>
<rect x="121.2" y="25.2" width="1.2" height="6"/>
<rect x="121.2" y="614.6" width="1.2" height="6"/>
<rect x="133.2" y="25.2" width="1.2" height="2.6"/>
<rect x="133.2" y="618.0" width="1.2" height="2.6"/>
<rect x="145.2" y="25.2" width="1.2" height="2.6"/>
<rect x="145.2" y="618.0" width="1.2" height="2.6"/>
<rect x="157.2" y="25.2" width="1.2" height="2.6"/>
<rect x="157.2" y="618.0" width="1.2" height="2.6"/>
<rect x="169.2" y="25.2" width="1.2" height="2.6"/>
<rect x="169.2" y="618.0" width="1.2" height="2.6"/>
<rect x="181.2" y="25.2" width="1.2" height="6"/>
<rect x="181.2" y="614.6" width="1.2" height="6"/>
<rect x="193.2" y="25.2" width="1.2" height="2.6"/>
<rect x="193.2" y="618.0" width="1.2" height="2.6"/>
<rect x="205.2" y="25.2" width="1.2" height="2.6"/>
<rect x="205.2" y="618.0" width="1.2" height="2.6"/>
<rect x="217.2" y="25.2" width="1.2" height="2.6"/>
<rect x="217.2" y="618.0" width="1.2" height="2.6"/>
<rect x="229.2" y="25.2" width="1.2" height="2.6"/>
<rect x="229.2" y="618.0" width="1.2" height="2.6"/>
<rect x="241.2" y="25.2" width="1.2" height="6"/>
<rect x="241.2" y="614.6" width="1.2" height="6"/>
<rect x="253.2" y="25.2" width="1.2" height="2.6"/>
<rect x="253.2" y="618.0" width="1.2" height="2.6"/>
<rect x="265.2" y="25.2" width="1.2" height="2.6"/>
<rect x="265.2" y="618.0" width="1.2" height="2.6"/>
<rect x="277.2" y="25.2" width="1.2" height="2.6"/>
<rect x="277.2" y="618.0" width="1.2" height="2.6"/>
<rect x="289.2" y="25.2" width="1.2" height="2.6"/>
<rect x="289.2" y="618.0" width="1.2" height="2.6"/>
<rect x="301.2" y="25.2" width="1.2" height="6"/>
<rect x="301.2" y="614.6" width="1.2" height="6"/>
<rect x="313.2" y="25.2" width="1.2" height="2.6"/>
<rect x="313.2" y="618.0" width="1.2" height="2.6"/>
<rect x="325.2" y="25.2" width="1.2" height="2.6"/>
<rect x="325.2" y="618.0" width="1.2" height="2.6"/>
<rect x="337.2" y="25.2" width="1.2" height="2.6"/>
<rect x="337.2" y="618.0" width="1.2" height="2.6"/>
<rect x="349.2" y="25.2" width="1.2" height="2.6"/>
<rect x="349.2" y="618.0" width="1.2" height="2.6"/>
<rect x="361.2" y="25.2" width="1.2" height="6"/>
<rect x="361.2" y="614.6" width="1.2" height="6"/>
<rect x="373.2" y="25.2" width="1.2" height="2.6"/>
<rect x="373.2" y="618.0" width="1.2" height="2.6"/>
<rect x="385.2" y="25.2" width="1.2" height="2.6"/>
<rect x="385.2" y="618.0" width="1.2" height="2.6"/>
<rect x="397.2" y="25.2" width="1.2" height="2.6"/>
<rect x="397.2" y="618.0" width="1.2" height="2.6"/>
<rect x="409.2" y="25.2" width="1.2" height="2.6"/>
<rect x="409.2" y="618.0" width="1.2" height="2.6"/>
<rect x="421.2" y="25.2" width="1.2" height="6"/>
<rect x="421.2" y="614.6" width="1.2" height="6"/>
<rect x="433.2" y="25.2" width="1.2" height="2.6"/>
<rect x="433.2" y="618.0" width="1.2" height="2.6"/>
<rect x="445.2" y="25.2" width="1.2" height="2.6"/>
<rect x="445.2" y="618.0" width="1.2" height="2.6"/>
<rect x="457.2" y="25.2" width="1.2" height="2.6"/>
<rect x="457.2" y="618.0" width="1.2" height="2.6"/>
<rect x="469.2" y="25.2" width="1.2" height="2.6"/>
<rect x="469.2" y="618.0" width="1.2" height="2.6"/>
<rect x="481.2" y="25.2" width="1.2" height="6"/>
<rect x="481.2" y="614.6" width="1.2" height="6"/>
<rect x="493.2" y="25.2" width="1.2" height="2.6"/>
<rect x="493.2" y="618.0" width="1.2" height="2.6"/>
<rect x="505.2" y="25.2" width="1.2" height="2.6"/>
<rect x="505.2" y="618.0" width="1.2" height="2.6"/>
<rect x="517.2" y="25.2" width="1.2" height="2.6"/>
<rect x="517.2" y="618.0" width="1.2" height="2.6"/>
<rect x="529.2" y="25.2" width="1.2" height="2.6"/>
<rect x="529.2" y="618.0" width="1.2" height="2.6"/>
<rect x="541.2" y="25.2" width="1.2" height="6"/>
<rect x="541.2" y="614.6" width="1.2" height="6"/>
<rect x="553.2" y="25.2" width="1.2" height="2.6"/>
<rect x="553.2" y="618.0" width="1.2" height="2.6"/>
<rect x="565.2" y="25.2" width="1.2" height="2.6"/>
<rect x="565.2" y="618.0" width="1.2" height="2.6"/>
<rect x="577.2" y="25.2" width="1.2" height="2.6"/>
<rect x="577.2" y="618.0" width="1.2" height="2.6"/>
<rect x="589.2" y="25.2" width="1.2" height="2.6"/>
<rect x="589.2" y="618.0" width="1.2" height="2.6"/>
<rect x="601.2" y="25.2" width="1.2" height="6"/>
<rect x="601.2" y="614.6" width="1.2" height="6"/>
<rect x="613.2" y="25.2" width="1.2" height="2.6"/>
<rect x="613.2" y="618.0" width="1.2" height="2.6"/>
<rect x="625.2" y="25.2" width="1.2" height="2.6"/>
<rect x="625.2" y="618.0" width="1.2" height="2.6"/>
<rect x="637.2" y="25.2" width="1.2" height="2.6"/>
<rect x="637.2" y="618.0" width="1.2" height="2.6"/>
<rect x="649.2" y="25.2" width="1.2" height="2.6"/>
<rect x="649.2" y="618.0" width="1.2" height="2.6"/>
<rect x="661.2" y="25.2" width="1.2" height="6"/>
<rect x="661.2" y="614.6" width="1.2" height="6"/>
<rect x="673.2" y="25.2" width="1.2" height="2.6"/>
<rect x="673.2" y="618.0" width="1.2" height="2.6"/>
<rect x="685.2" y="25.2" width="1.2" height="2.6"/>
<rect x="685.2" y="618.0" width="1.2" height="2.6"/>
<rect x="697.2" y="25.2" width="1.2" height="2.6"/>
<rect x="697.2" y="618.0" width="1.2" height="2.6"/>
<rect x="709.2" y="25.2" width="1.2" height="2.6"/>
<rect x="709.2" y="618.0" width="1.2" height="2.6"/>
<rect x="721.2" y="25.2" width="1.2" height="6"/>
<rect x="721.2" y="614.6" width="1.2" height="6"/>
<rect x="733.2" y="25.2" width="1.2" height="2.6"/>
<rect x="733.2" y="618.0" width="1.2" height="2.6"/>
<rect x="745.2" y="25.2" width="1.2" height="2.6"/>
<rect x="745.2" y="618.0" width="1.2" height="2.6"/>
<rect x="757.2" y="25.2" width="1.2" height="2.6"/>
<rect x="757.2" y="618.0" width="1.2" height="2.6"/>
<rect x="769.2" y="25.2" width="1.2" height="2.6"/>
<rect x="769.2" y="618.0" width="1.2" height="2.6"/>
<rect x="781.2" y="25.2" width="1.2" height="6"/>
<rect x="781.2" y="614.6" width="1.2" height="6"/>
<rect x="793.2" y="25.2" width="1.2" height="2.6"/>
<rect x="793.2" y="618.0" width="1.2" height="2.6"/>
<rect x="805.2" y="25.2" width="1.2" height="2.6"/>
<rect x="805.2" y="618.0" width="1.2" height="2.6"/>
<rect x="817.2" y="25.2" width="1.2" height="2.6"/>
<rect x="817.2" y="618.0" width="1.2" height="2.6"/>
<rect x="829.2" y="25.2" width="1.2" height="2.6"/>
<rect x="829.2" y="618.0" width="1.2" height="2.6"/>
<rect x="841.2" y="25.2" width="1.2" height="6"/>
<rect x="841.2" y="614.6" width="1.2" height="6"/>
<rect x="853.2" y="25.2" width="1.2" height="2.6"/>
<rect x="853.2" y="618.0" width="1.2" height="2.6"/>
<rect x="865.2" y="25.2" width="1.2" height="2.6"/>
<rect x="865.2" y="618.0" width="1.2" height="2.6"/>
<rect x="877.2" y="25.2" width="1.2" height="2.6"/>
<rect x="877.2" y="618.0" width="1.2" height="2.6"/>
<rect x="889.2" y="25.2" width="1.2" height="2.6"/>
<rect x="889.2" y="618.0" width="1.2" height="2.6"/>
<rect x="901.2" y="25.2" width="1.2" height="6"/>
<rect x="901.2" y="614.6" width="1.2" height="6"/>
<rect x="913.2" y="25.2" width="1.2" height="2.6"/>
<rect x="913.2" y="618.0" width="1.2" height="2.6"/>
<rect x="925.2" y="25.2" width="1.2" height="2.6"/>
<rect x="925.2" y="618.0" width="1.2" height="2.6"/>
<rect x="26.3" y="34.8" width="3.7" height="1.2"/>
<rect x="930.1" y="34.8" width="3.7" height="1.2"/>
<rect x="26.3" y="46.8" width="3.7" height="1.2"/>
<rect x="930.1" y="46.8" width="3.7" height="1.2"/>
<rect x="26.3" y="58.8" width="3.7" height="1.2"/>
<rect x="930.1" y="58.8" width="3.7" height="1.2"/>
<rect x="26.3" y="70.8" width="3.7" height="1.2"/>
<rect x="930.1" y="70.8" width="3.7" height="1.2"/>
<rect x="26.3" y="82.8" width="7.4" height="1.2"/>
<rect x="926.4" y="82.8" width="7.4" height="1.2"/>
<rect x="26.3" y="94.8" width="3.7" height="1.2"/>
<rect x="930.1" y="94.8" width="3.7" height="1.2"/>
<rect x="26.3" y="106.8" width="3.7" height="1.2"/>
<rect x="930.1" y="106.8" width="3.7" height="1.2"/>
<rect x="26.3" y="118.8" width="3.7" height="1.2"/>
<rect x="930.1" y="118.8" width="3.7" height="1.2"/>
<rect x="26.3" y="130.8" width="3.7" height="1.2"/>
<rect x="930.1" y="130.8" width="3.7" height="1.2"/>
<rect x="26.3" y="142.8" width="7.4" height="1.2"/>
<rect x="926.4" y="142.8" width="7.4" height="1.2"/>
<rect x="26.3" y="154.8" width="3.7" height="1.2"/>
<rect x="930.1" y="154.8" width="3.7" height="1.2"/>
<rect x="26.3" y="166.8" width="3.7" height="1.2"/>
<rect x="930.1" y="166.8" width="3.7" height="1.2"/>
<rect x="26.3" y="178.8" width="3.7" height="1.2"/>
<rect x="930.1" y="178.8" width="3.7" height="1.2"/>
<rect x="26.3" y="190.8" width="3.7" height="1.2"/>
<rect x="930.1" y="190.8" width="3.7" height="1.2"/>
<rect x="26.3" y="202.8" width="7.4" height="1.2"/>
<rect x="926.4" y="202.8" width="7.4" height="1.2"/>
<rect x="26.3" y="214.8" width="3.7" height="1.2"/>
<rect x="930.1" y="214.8" width="3.7" height="1.2"/>
<rect x="26.3" y="226.8" width="3.7" height="1.2"/>
<rect x="930.1" y="226.8" width="3.7" height="1.2"/>
<rect x="26.3" y="238.8" width="3.7" height="1.2"/>
<rect x="930.1" y="238.8" width="3.7" height="1.2"/>
<rect x="26.3" y="250.8" width="3.7" height="1.2"/>
<rect x="930.1" y="250.8" width="3.7" height="1.2"/>
<rect x="26.3" y="262.8" width="7.4" height="1.2"/>
<rect x="926.4" y="262.8" width="7.4" height="1.2"/>
<rect x="26.3" y="274.8" width="3.7" height="1.2"/>
<rect x="930.1" y="274.8" width="3.7" height="1.2"/>
<rect x="26.3" y="286.8" width="3.7" height="1.2"/>
<rect x="930.1" y="286.8" width="3.7" height="1.2"/>
<rect x="26.3" y="298.8" width="3.7" height="1.2"/>
<rect x="930.1" y="298.8" width="3.7" height="1.2"/>
<rect x="26.3" y="310.8" width="3.7" height="1.2"/>
<rect x="930.1" y="310.8" width="3.7" height="1.2"/>
<rect x="26.3" y="322.8" width="7.4" height="1.2"/>
<rect x="926.4" y="322.8" width="7.4" height="1.2"/>
<rect x="26.3" y="334.8" width="3.7" height="1.2"/>
<rect x="930.1" y="334.8" width="3.7" height="1.2"/>
<rect x="26.3" y="346.8" width="3.7" height="1.2"/>
<rect x="930.1" y="346.8" width="3.7" height="1.2"/>
<rect x="26.3" y="358.8" width="3.7" height="1.2"/>
<rect x="930.1" y="358.8" width="3.7" height="1.2"/>
<rect x="26.3" y="370.8" width="3.7" height="1.2"/>
<rect x="930.1" y="370.8" width="3.7" height="1.2"/>
<rect x="26.3" y="382.8" width="7.4" height="1.2"/>
<rect x="926.4" y="382.8" width="7.4" height="1.2"/>
<rect x="26.3" y="394.8" width="3.7" height="1.2"/>
<rect x="930.1" y="394.8" width="3.7" height="1.2"/>
<rect x="26.3" y="406.8" width="3.7" height="1.2"/>
<rect x="930.1" y="406.8" width="3.7" height="1.2"/>
<rect x="26.3" y="418.8" width="3.7" height="1.2"/>
<rect x="930.1" y="418.8" width="3.7" height="1.2"/>
<rect x="26.3" y="430.8" width="3.7" height="1.2"/>
<rect x="930.1" y="430.8" width="3.7" height="1.2"/>
<rect x="26.3" y="442.8" width="7.4" height="1.2"/>
<rect x="926.4" y="442.8" width="7.4" height="1.2"/>
<rect x="26.3" y="454.8" width="3.7" height="1.2"/>
<rect x="930.1" y="454.8" width="3.7" height="1.2"/>
<rect x="26.3" y="466.8" width="3.7" height="1.2"/>
<rect x="930.1" y="466.8" width="3.7" height="1.2"/>
<rect x="26.3" y="478.8" width="3.7" height="1.2"/>
<rect x="930.1" y="478.8" width="3.7" height="1.2"/>
<rect x="26.3" y="490.8" width="3.7" height="1.2"/>
<rect x="930.1" y="490.8" width="3.7" height="1.2"/>
<rect x="26.3" y="502.8" width="7.4" height="1.2"/>
<rect x="926.4" y="502.8" width="7.4" height="1.2"/>
<rect x="26.3" y="514.8" width="3.7" height="1.2"/>
<rect x="930.1" y="514.8" width="3.7" height="1.2"/>
<rect x="26.3" y="526.8" width="3.7" height="1.2"/>
<rect x="930.1" y="526.8" width="3.7" height="1.2"/>
<rect x="26.3" y="538.8" width="3.7" height="1.2"/>
<rect x="930.1" y="538.8" width="3.7" height="1.2"/>
<rect x="26.3" y="550.8" width="3.7" height="1.2"/>
<rect x="930.1" y="550.8" width="3.7" height="1.2"/>
<rect x="26.3" y="562.8" width="7.4" height="1.2"/>
<rect x="926.4" y="562.8" width="7.4" height="1.2"/>
<rect x="26.3" y="574.8" width="3.7" height="1.2"/>
<rect x="930.1" y="574.8" width="3.7" height="1.2"/>
<rect x="26.3" y="586.8" width="3.7" height="1.2"/>
<rect x="930.1" y="586.8" width="3.7" height="1.2"/>
<rect x="26.3" y="598.8" width="3.7" height="1.2"/>
<rect x="930.1" y="598.8" width="3.7" height="1.2"/>
<rect x="26.3" y="610.8" width="3.7" height="1.2"/>
<rect x="930.1" y="610.8" width="3.7" height="1.2"/>
</g>
<g fill="#f4f400">
<rect x="26.3" y="265" width="907.5" height="2.3"/>
<rect x="26.0" y="267.1" width="1.2" height="2.6"/>
<rect x="28.4" y="267.1" width="1.2" height="3.4"/>
<rect x="29.6" y="261.8" width="1.2" height="3.4"/>
<rect x="36.8" y="262.6" width="2.4" height="2.6"/>
<rect x="40.4" y="267.1" width="1.2" height="3.4"/>
<rect x="42.8" y="267.1" width="1.2" height="2.6"/>
<rect x="52.4" y="267.1" width="1.2" height="1.4"/>
<rect x="57.2" y="263.8" width="1.2" height="1.4"/>
<rect x="60.8" y="267.1" width="1.2" height="2.6"/>
<rect x="62.0" y="262.6" width="1.2" height="2.6"/>
<rect x="63.2" y="262.6" width="1.2" height="2.6"/>
<rect x="65.6" y="263.8" width="1.2" height="1.4"/>
<rect x="69.2" y="267.1" width="2.4" height="2.6"/>
<rect x="74.0" y="262.6" width="1.2" height="2.6"/>
<rect x="76.4" y="267.1" width="1.2" height="3.4"/>
<rect x="77.6" y="261.8" width="2.4" height="3.4"/>
<rect x="78.8" y="262.6" width="1.2" height="2.6"/>
<rect x="86.0" y="261.8" width="1.2" height="3.4"/>
<rect x="114.8" y="263.8" width="2.4" height="1.4"/>
<rect x="117.2" y="267.1" width="1.2" height="2.6"/>
<rect x="120.8" y="263.8" width="1.2" height="1.4"/>
<rect x="123.2" y="267.1" width="2.4" height="3.4"/>
<rect x="124.4" y="267.1" width="1.2" height="2.6"/>
<rect x="125.6" y="263.8" width="1.2" height="1.4"/>
<rect x="128.0" y="267.1" width="1.2" height="2.6"/>
<rect x="130.4" y="262.6" width="2.4" height="2.6"/>
<rect x="132.8" y="267.1" width="1.2" height="2.6"/>
<rect x="136.4" y="263.8" width="1.2" height="1.4"/>
<rect x="138.8" y="262.6" width="2.4" height="2.6"/>
<rect x="146.0" y="267.1" width="1.2" height="1.4"/>
<rect x="152.0" y="263.8" width="1.2" height="1.4"/>
<rect x="158.0" y="267.1" width="1.2" height="3.4"/>
<rect x="161.6" y="267.1" width="2.4" height="3.4"/>
<rect x="162.8" y="263.8" width="1.2" height="1.4"/>
<rect x="164.0" y="267.1" width="1.2" height="2.6"/>
<rect x="165.2" y="261.8" width="1.2" height="3.4"/>
<rect x="173.6" y="262.6" width="1.2" height="2.6"/>
<rect x="182.0" y="267.1" width="1.2" height="2.6"/>
<rect x="184.4" y="267.1" width="1.2" height="1.4"/>
<rect x="188.0" y="262.6" width="1.2" height="2.6"/>
<rect x="198.8" y="267.1" width="2.4" height="2.6"/>
<rect x="202.4" y="261.8" width="1.2" height="3.4"/>
<rect x="204.8" y="262.6" width="1.2" height="2.6"/>
<rect x="208.4" y="267.1" width="1.2" height="2.6"/>
<rect x="210.8" y="262.6" width="1.2" height="2.6"/>
<rect x="214.4" y="262.6" width="1.2" height="2.6"/>
<rect x="216.8" y="267.1" width="2.4" height="3.4"/>
<rect x="219.2" y="267.1" width="1.2" height="2.6"/>
<rect x="226.4" y="263.8" width="1.2" height="1.4"/>
<rect x="228.8" y="267.1" width="1.2" height="2.6"/>
<rect x="230.0" y="267.1" width="1.2" height="1.4"/>
<rect x="232.4" y="267.1" width="1.2" height="1.4"/>
<rect x="233.6" y="262.6" width="1.2" height="2.6"/>
<rect x="240.8" y="261.8" width="1.2" height="3.4"/>
<rect x="243.2" y="267.1" width="1.2" height="3.4"/>
<rect x="246.8" y="267.1" width="1.2" height="2.6"/>
<rect x="251.6" y="267.1" width="1.2" height="3.4"/>
<rect x="256.4" y="261.8" width="2.4" height="3.4"/>
<rect x="258.8" y="261.8" width="1.2" height="3.4"/>
<rect x="261.2" y="262.6" width="2.4" height="2.6"/>
<rect x="262.4" y="267.1" width="2.4" height="1.4"/>
<rect x="266.0" y="267.1" width="1.2" height="2.6"/>
<rect x="268.4" y="262.6" width="1.2" height="2.6"/>
<rect x="270.8" y="263.8" width="1.2" height="1.4"/>
<rect x="274.4" y="263.8" width="1.2" height="1.4"/>
<rect x="280.4" y="267.1" width="2.4" height="3.4"/>
<rect x="286.4" y="267.1" width="2.4" height="3.4"/>
<rect x="288.8" y="267.1" width="1.2" height="3.4"/>
<rect x="293.6" y="267.1" width="1.2" height="2.6"/>
<rect x="298.4" y="267.1" width="1.2" height="1.4"/>
<rect x="300.8" y="262.6" width="1.2" height="2.6"/>
<rect x="308.0" y="267.1" width="1.2" height="2.6"/>
<rect x="309.2" y="267.1" width="1.2" height="2.6"/>
<rect x="312.8" y="267.1" width="1.2" height="2.6"/>
<rect x="316.4" y="261.8" width="2.4" height="3.4"/>
<rect x="320.0" y="262.6" width="1.2" height="2.6"/>
<rect x="323.6" y="262.6" width="1.2" height="2.6"/>
<rect x="324.8" y="261.8" width="1.2" height="3.4"/>
<rect x="328.4" y="263.8" width="1.2" height="1.4"/>
<rect x="330.8" y="262.6" width="1.2" height="2.6"/>
<rect x="334.4" y="263.8" width="1.2" height="1.4"/>
<rect x="336.8" y="267.1" width="1.2" height="2.6"/>
<rect x="344.0" y="261.8" width="1.2" height="3.4"/>
<rect x="351.2" y="262.6" width="1.2" height="2.6"/>
<rect x="354.8" y="267.1" width="1.2" height="3.4"/>
<rect x="357.2" y="267.1" width="1.2" height="2.6"/>
<rect x="362.0" y="262.6" width="1.2" height="2.6"/>
<rect x="364.4" y="262.6" width="1.2" height="2.6"/>
<rect x="368.0" y="262.6" width="1.2" height="2.6"/>
<rect x="369.2" y="262.6" width="2.4" height="2.6"/>
<rect x="375.2" y="267.1" width="1.2" height="1.4"/>
<rect x="377.6" y="267.1" width="2.4" height="2.6"/>
<rect x="378.8" y="262.6" width="2.4" height="2.6"/>
<rect x="382.4" y="262.6" width="1.2" height="2.6"/>
<rect x="384.8" y="262.6" width="1.2" height="2.6"/>
<rect x="394.4" y="262.6" width="1.2" height="2.6"/>
<rect x="396.8" y="267.1" width="1.2" height="2.6"/>
<rect x="401.6" y="262.6" width="1.2" height="2.6"/>
<rect x="405.2" y="263.8" width="1.2" height="1.4"/>
<rect x="406.4" y="262.6" width="1.2" height="2.6"/>
<rect x="416.0" y="267.1" width="1.2" height="2.6"/>
<rect x="418.4" y="262.6" width="2.4" height="2.6"/>
<rect x="420.8" y="267.1" width="2.4" height="3.4"/>
<rect x="425.6" y="262.6" width="1.2" height="2.6"/>
<rect x="426.8" y="263.8" width="2.4" height="1.4"/>
<rect x="428.0" y="267.1" width="1.2" height="1.4"/>
<rect x="430.4" y="267.1" width="1.2" height="2.6"/>
<rect x="434.0" y="262.6" width="1.2" height="2.6"/>
<rect x="441.2" y="267.1" width="1.2" height="2.6"/>
<rect x="443.6" y="267.1" width="1.2" height="3.4"/>
<rect x="446.0" y="267.1" width="1.2" height="2.6"/>
<rect x="448.4" y="262.6" width="1.2" height="2.6"/>
<rect x="449.6" y="267.1" width="1.2" height="2.6"/>
<rect x="450.8" y="261.8" width="1.2" height="3.4"/>
<rect x="453.2" y="267.1" width="1.2" height="2.6"/>
<rect x="455.6" y="267.1" width="1.2" height="2.6"/>
<rect x="456.8" y="261.8" width="1.2" height="3.4"/>
<rect x="460.4" y="267.1" width="1.2" height="2.6"/>
<rect x="462.8" y="267.1" width="1.2" height="3.4"/>
<rect x="464.0" y="262.6" width="1.2" height="2.6"/>
<rect x="474.8" y="267.1" width="1.2" height="2.6"/>
<rect x="477.2" y="267.1" width="1.2" height="3.4"/>
<rect x="482.0" y="267.1" width="1.2" height="3.4"/>
<rect x="484.4" y="267.1" width="1.2" height="2.6"/>
<rect x="488.0" y="267.1" width="1.2" height="2.6"/>
<rect x="490.4" y="267.1" width="1.2" height="2.6"/>
<rect x="494.0" y="267.1" width="1.2" height="2.6"/>
<rect x="497.6" y="267.1" width="2.4" height="1.4"/>
<rect x="498.8" y="267.1" width="1.2" height="2.6"/>
<rect x="507.2" y="267.1" width="1.2" height="1.4"/>
<rect x="519.2" y="262.6" width="1.2" height="2.6"/>
<rect x="520.4" y="267.1" width="1.2" height="2.6"/>
<rect x="526.4" y="263.8" width="1.2" height="1.4"/>
<rect x="527.6" y="261.8" width="1.2" height="3.4"/>
<rect x="531.2" y="262.6" width="1.2" height="2.6"/>
<rect x="534.8" y="267.1" width="2.4" height="2.6"/>
<rect x="545.6" y="263.8" width="1.2" height="1.4"/>
<rect x="570.8" y="267.1" width="1.2" height="2.6"/>
<rect x="575.6" y="261.8" width="1.2" height="3.4"/>
<rect x="576.8" y="267.1" width="1.2" height="2.6"/>
<rect x="578.0" y="267.1" width="1.2" height="3.4"/>
<rect x="585.2" y="262.6" width="1.2" height="2.6"/>
<rect x="588.8" y="267.1" width="1.2" height="3.4"/>
<rect x="593.6" y="261.8" width="1.2" height="3.4"/>
<rect x="598.4" y="267.1" width="1.2" height="1.4"/>
<rect x="608.0" y="267.1" width="1.2" height="2.6"/>
<rect x="612.8" y="261.8" width="1.2" height="3.4"/>
<rect x="616.4" y="263.8" width="1.2" height="1.4"/>
<rect x="624.8" y="263.8" width="1.2" height="1.4"/>
<rect x="626.0" y="267.1" width="1.2" height="2.6"/>
<rect x="628.4" y="267.1" width="1.2" height="3.4"/>
<rect x="629.6" y="263.8" width="1.2" height="1.4"/>
<rect x="647.6" y="267.1" width="1.2" height="3.4"/>
<rect x="657.2" y="262.6" width="1.2" height="2.6"/>
<rect x="658.4" y="262.6" width="1.2" height="2.6"/>
<rect x="662.0" y="267.1" width="2.4" height="2.6"/>
<rect x="664.4" y="267.1" width="2.4" height="2.6"/>
<rect x="669.2" y="262.6" width="1.2" height="2.6"/>
<rect x="671.6" y="267.1" width="1.2" height="2.6"/>
<rect x="675.2" y="267.1" width="1.2" height="2.6"/>
<rect x="678.8" y="262.6" width="2.4" height="2.6"/>
<rect x="681.2" y="267.1" width="1.2" height="2.6"/>
<rect x="688.4" y="267.1" width="1.2" height="2.6"/>
<rect x="692.0" y="267.1" width="1.2" height="2.6"/>
<rect x="696.8" y="263.8" width="1.2" height="1.4"/>
<rect x="700.4" y="262.6" width="2.4" height="2.6"/>
<rect x="702.8" y="267.1" width="1.2" height="2.6"/>
<rect x="706.4" y="263.8" width="1.2" height="1.4"/>
<rect x="708.8" y="267.1" width="1.2" height="3.4"/>
<rect x="711.2" y="267.1" width="1.2" height="2.6"/>
<rect x="712.4" y="267.1" width="1.2" height="3.4"/>
<rect x="716.0" y="263.8" width="1.2" height="1.4"/>
<rect x="725.6" y="267.1" width="2.4" height="2.6"/>
<rect x="735.2" y="267.1" width="1.2" height="2.6"/>
<rect x="741.2" y="262.6" width="2.4" height="2.6"/>
<rect x="743.6" y="261.8" width="2.4" height="3.4"/>
<rect x="747.2" y="262.6" width="1.2" height="2.6"/>
<rect x="749.6" y="262.6" width="2.4" height="2.6"/>
<rect x="753.2" y="267.1" width="1.2" height="2.6"/>
<rect x="755.6" y="267.1" width="1.2" height="2.6"/>
<rect x="759.2" y="267.1" width="1.2" height="2.6"/>
<rect x="761.6" y="267.1" width="1.2" height="1.4"/>
<rect x="767.6" y="267.1" width="1.2" height="3.4"/>
<rect x="770.0" y="267.1" width="1.2" height="1.4"/>
<rect x="779.6" y="267.1" width="1.2" height="2.6"/>
<rect x="780.8" y="267.1" width="1.2" height="1.4"/>
<rect x="783.2" y="262.6" width="1.2" height="2.6"/>
<rect x="786.8" y="262.6" width="1.2" height="2.6"/>
<rect x="789.2" y="267.1" width="1.2" height="1.4"/>
<rect x="790.4" y="267.1" width="1.2" height="3.4"/>
<rect x="791.6" y="262.6" width="1.2" height="2.6"/>
<rect x="792.8" y="267.1" width="1.2" height="2.6"/>
<rect x="795.2" y="267.1" width="1.2" height="2.6"/>
<rect x="800.0" y="267.1" width="1.2" height="1.4"/>
<rect x="801.2" y="267.1" width="1.2" height="2.6"/>
<rect x="807.2" y="267.1" width="2.4" height="3.4"/>
<rect x="809.6" y="267.1" width="2.4" height="1.4"/>
<rect x="813.2" y="262.6" width="1.2" height="2.6"/>
<rect x="815.6" y="261.8" width="2.4" height="3.4"/>
<rect x="819.2" y="263.8" width="2.4" height="1.4"/>
<rect x="825.2" y="267.1" width="1.2" height="3.4"/>
<rect x="828.8" y="267.1" width="1.2" height="1.4"/>
<rect x="833.6" y="262.6" width="2.4" height="2.6"/>
<rect x="839.6" y="267.1" width="1.2" height="2.6"/>
<rect x="842.0" y="261.8" width="1.2" height="3.4"/>
<rect x="843.2" y="262.6" width="1.2" height="2.6"/>
<rect x="845.6" y="267.1" width="1.2" height="2.6"/>
<rect x="849.2" y="267.1" width="1.2" height="1.4"/>
<rect x="855.2" y="267.1" width="1.2" height="2.6"/>
<rect x="858.8" y="262.6" width="1.2" height="2.6"/>
<rect x="862.4" y="262.6" width="1.2" height="2.6"/>
<rect x="864.8" y="263.8" width="1.2" height="1.4"/>
<rect x="867.2" y="262.6" width="1.2" height="2.6"/>
<rect x="873.2" y="261.8" width="1.2" height="3.4"/>
<rect x="876.8" y="262.6" width="1.2" height="2.6"/>
<rect x="880.4" y="267.1" width="1.2" height="2.6"/>
<rect x="882.8" y="263.8" width="1.2" height="1.4"/>
<rect x="886.4" y="267.1" width="1.2" height="3.4"/>
<rect x="888.8" y="262.6" width="1.2" height="2.6"/>
<rect x="892.4" y="262.6" width="1.2" height="2.6"/>
<rect x="897.2" y="267.1" width="1.2" height="3.4"/>
<rect x="899.6" y="263.8" width="1.2" height="1.4"/>
<rect x="902.0" y="262.6" width="1.2" height="2.6"/>
<rect x="905.6" y="267.1" width="2.4" height="2.6"/>
<rect x="908.0" y="262.6" width="1.2" height="2.6"/>
<rect x="914.0" y="262.6" width="1.2" height="2.6"/>
<rect x="915.2" y="262.6" width="1.2" height="2.6"/>
<rect x="920.0" y="267.1" width="1.2" height="2.6"/>
<rect x="922.4" y="263.8" width="1.2" height="1.4"/>
<rect x="927.2" y="262.6" width="1.2" height="2.6"/>
<rect x="928.4" y="267.1" width="1.2" height="2.6"/>
<rect x="930.8" y="267.1" width="1.2" height="2.6"/>
<rect x="933.2" y="267.1" width="1.2" height="3.4"/>
</g>
<path d="M474.5 25.2 V37 L481.8 41.2 L489 37 V25.2" fill="#000" stroke="#a020e0" stroke-width="1.9"/>
<path d="M477.6 29 H486 M481.8 29 V37" stroke="#d030e0" stroke-width="1.8" fill="none"/>
<text class="m" x="29" y="19" font-size="18" letter-spacing="1.2" fill="#001c50" stroke="#001c50" stroke-width="0.45">AKTAKOM</text>
<rect x="144" y="1" width="96.5" height="22" rx="11" fill="#e80000"/>
<text class="m" x="167.8" y="17.6" font-size="18" letter-spacing="1.2" fill="#640000" stroke="#640000" stroke-width="0.45">Stop</text>
<rect x="300" y="0" width="360" height="23" rx="11.5" fill="#000"/>
<rect x="312" y="10.8" width="337" height="1.3" fill="#c8c800"/>
<path d="M353.2 2.8 H357.2 V4 H355.6 V21.4 H357.2 V22.6 H353.2 Z" fill="#d4d4d4"/>
<path d="M607.2 2.8 H603.2 V4 H604.8 V21.4 H603.2 V22.6 H607.2 Z" fill="#d4d4d4"/>
<path d="M477.8 3.4 H484.2 M481 3.4 V8" stroke="#e020e0" stroke-width="1.4" fill="none"/>
<rect x="671" y="0" width="131" height="23" rx="11.5" fill="#000"/>
<path d="M677.2 4.6 H691 V16 L684.1 20.4 L677.2 16 Z" fill="#000" stroke="#a020e0" stroke-width="1.8"/>
<path d="M680.4 8.2 H687.8 M684.1 8.2 V16" stroke="#d030e0" stroke-width="1.8" fill="none"/>
<text class="s" x="700.4" y="19" font-size="16.8" text-anchor="middle" fill="#e0e0e0" >0</text>
<text class="s" x="724.4" y="19" font-size="16.8" text-anchor="middle" fill="#e0e0e0" >0</text>
<text class="s" x="736.4" y="19" font-size="16.8" text-anchor="middle" fill="#e0e0e0" >0</text>
<text class="s" x="748.4" y="19" font-size="16.8" text-anchor="middle" fill="#e0e0e0" >0</text>
<text class="m" x="695" y="19" font-size="18" letter-spacing="1.2" fill="#e0e0e0" > .   ns</text>
<rect x="820" y="0" width="72" height="23" rx="11.5" fill="#000"/>
<text class="m" x="831" y="18" font-size="18" letter-spacing="1.2" fill="#e0e0e0" >9:18</text>
<g><path d="M909 13 L916.2 8.2 L922 15 L913 19.6 Z" fill="#1458c8"/><path d="M911.6 15.2 L919.6 12.6 L920.8 14.6 L913.2 18.2 Z" fill="#e4ccdc"/><path d="M912.6 13.4 L917 11.4 L918.6 13 L913.8 15.2 Z" fill="#284070"/><path d="M909.6 12.6 L911.4 12 L912.4 16 L911 16.6 Z" fill="#a8d4e4"/><path d="M907 5.4 L911.6 3.6 L916.6 5 L915.2 9 L912.2 9 L911.2 12.6 L908 11 Z" fill="#2cae10"/><path d="M907.4 7 L911.4 6.6 L911 11.6 L908 10.8 Z" fill="#66e458"/></g>
<path d="M0.6 313.6 H17.4 L23.6 323.6 L17.4 333.8 H0.6 Z" fill="#000" stroke="#e0e820" stroke-width="1.4"/>
<text x="3.6" y="330" font-size="17" fill="#e8e820" class="s">2</text>
<path d="M937 311.6 L952 304.7 L952 318.7 Z" fill="#b020e0"/>
<rect x="0" y="623" width="383.4" height="97" fill="#30a8e0"/>
<rect x="0" y="716.4" width="383.4" height="3.6" fill="#68b8d0"/>
<rect x="0" y="626" width="1.8" height="94" fill="#68b8d0"/>
<rect x="0.95" y="623.15" width="249.8" height="48.7" rx="5.85" fill="#000" stroke="#68b8d0" stroke-width="1.7"/>
<rect x="2.4" y="646.7" width="247" height="1.2" fill="#2a6880"/>
<path d="M1.8 644.6 L4.4 647.3 L1.8 650 Z M249.9 644.6 L247.3 647.3 L249.9 650 Z" fill="#2a90c8"/>
<rect x="252.525" y="623.125" width="127.95" height="48.75" rx="6.875" fill="#000" stroke="#68b8d0" stroke-width="1.75"/>
<rect x="0.925" y="672.525" width="379.55" height="44.35" rx="6.875" fill="#000" stroke="#68b8d0" stroke-width="1.75"/>
<rect x="379.8" y="626" width="3.4" height="94" fill="#68b8d0"/>
<circle cx="12.3" cy="636.6" r="9.6" fill="#f00000"/>
<text x="12.3" y="642.6" font-size="17" fill="#000" stroke="#000" stroke-width="0.4" text-anchor="middle" class="s">1</text>
<circle cx="12.3" cy="660.2" r="9.6" fill="#f0e818"/>
<text x="12.3" y="666.2" font-size="17" fill="#000" stroke="#000" stroke-width="0.4" text-anchor="middle" class="s">2</text>
<circle cx="11.8" cy="683.9" r="9.6" fill="#f0e818"/>
<text x="11.8" y="689.9" font-size="17" fill="#000" stroke="#000" stroke-width="0.4" text-anchor="middle" class="s">2</text>
<circle cx="11.8" cy="706.7" r="9.6" fill="#f0e818"/>
<text x="11.8" y="712.7" font-size="17" fill="#000" stroke="#000" stroke-width="0.4" text-anchor="middle" class="s">2</text>
<circle cx="202" cy="684" r="9.6" fill="#f0e818"/>
<text x="202" y="690" font-size="17" fill="#000" stroke="#000" stroke-width="0.4" text-anchor="middle" class="s">2</text>
<circle cx="202" cy="706.7" r="9.6" fill="#f0e818"/>
<text x="202" y="712.7" font-size="17" fill="#000" stroke="#000" stroke-width="0.4" text-anchor="middle" class="s">2</text>
<text class="m" x="21.5" y="643.5" font-size="18" letter-spacing="1.2" fill="#b80008" >5V-</text>
<text class="s" x="132.4" y="643.5" font-size="16.8" text-anchor="middle" fill="#b80008" >0</text>
<text class="s" x="156.4" y="643.5" font-size="16.8" text-anchor="middle" fill="#b80008" >0</text>
<text class="s" x="168.4" y="643.5" font-size="16.8" text-anchor="middle" fill="#b80008" >0</text>
<text class="m" x="127" y="643.5" font-size="18" letter-spacing="1.2" fill="#b80008" > .  div</text>
<text class="m" x="21.5" y="667" font-size="18" letter-spacing="1.2" fill="#d8d818" >5V-</text>
<text class="s" x="132.4" y="667" font-size="16.8" text-anchor="middle" fill="#d8d818" >0</text>
<text class="s" x="156.4" y="667" font-size="16.8" text-anchor="middle" fill="#d8d818" >0</text>
<text class="s" x="168.4" y="667" font-size="16.8" text-anchor="middle" fill="#d8d818" >0</text>
<text class="m" x="127" y="667" font-size="18" letter-spacing="1.2" fill="#d8d818" > .  div</text>
<text class="m" x="25" y="690.4" font-size="18" letter-spacing="1.2" fill="#e0e020" >F:  ?</text>
<text class="m" x="25" y="713.4" font-size="18" letter-spacing="1.2" fill="#e0e020" >+D:  ?</text>
<text class="m" x="216" y="690.4" font-size="18" letter-spacing="1.2" fill="#e0e020" >Vk:4.798v</text>
<text class="m" x="216" y="713.4" font-size="18" letter-spacing="1.2" fill="#e0e020" >V:4.798v</text>
<text class="m" x="268.2" y="642" font-size="18" letter-spacing="1.2" fill="#d8d8d8" >(25KS/s)</text>
<text class="s" x="350.9" y="665.5" font-size="16.8" text-anchor="middle" fill="#d8d8d8" >0</text>
<text class="m" x="261.5" y="665.5" font-size="18" letter-spacing="1.2" fill="#d8d8d8" >Depth:1 K</text>
<rect x="383.4" y="645.2" width="574.4" height="71.6" fill="#06609c"/>
<rect x="383.4" y="651" width="563.4" height="65.8" fill="#0060a2"/>
<rect x="383.4" y="623.4" width="118" height="21.6" rx="10.8" fill="#000"/>
<text class="s" x="445.9" y="641" font-size="16.8" text-anchor="middle" fill="#e0e0e0" >0</text>
<text class="m" x="404.5" y="641" font-size="18" letter-spacing="1.2" fill="#e0e0e0" >M:2 ms</text>
<rect x="388" y="650" width="107.4" height="66.3" rx="3" fill="#004088"/>
<rect x="387" y="649" width="105.8" height="64.7" rx="3" fill="#48a4f8"/>
<rect x="389.4" y="651.6" width="103.4" height="62.1" rx="1.5" fill="#0080e0"/>
<rect x="718" y="650" width="107.4" height="66.3" rx="3" fill="#004088"/>
<rect x="717" y="649" width="105.8" height="64.7" rx="3" fill="#48a4f8"/>
<rect x="719.4" y="651.6" width="103.4" height="62.1" rx="1.5" fill="#0080e0"/>
<text class="m" x="415.5" y="674.5" font-size="18" letter-spacing="1.2" fill="#001c50" stroke="#001c50" stroke-width="0.45">Type</text>
<rect x="409" y="685.4" width="60.4" height="24" fill="#e8e8e8"/>
<text class="m" x="410.2" y="703" font-size="18" letter-spacing="1.2" fill="#000" >Image</text>
<text class="m" x="744.8" y="688.8" font-size="18" letter-spacing="1.2" fill="#001c50" stroke="#001c50" stroke-width="0.45">Save</text>
<rect x="797.5" y="623.4" width="154.5" height="21.9" rx="10.9" fill="#000"/>
<circle cx="810.8" cy="633.9" r="9.6" fill="#f0e818"/>
<text x="810.6" y="639.9" font-size="17" fill="#000" stroke="#000" stroke-width="0.4" text-anchor="middle" class="s">2</text>
<path d="M822 642.6 H832 L836.9 626.7 H845.4" stroke="#e0e0e0" stroke-width="1.4" fill="none"/>
<text class="s" x="877.4" y="642" font-size="16.8" text-anchor="middle" fill="#e0e0e0" >0</text>
<text class="s" x="889.4" y="642" font-size="16.8" text-anchor="middle" fill="#e0e0e0" >0</text>
<text class="m" x="848" y="642" font-size="18" letter-spacing="1.2" fill="#e0e0e0" >1.  V</text>
</svg></body></html>
